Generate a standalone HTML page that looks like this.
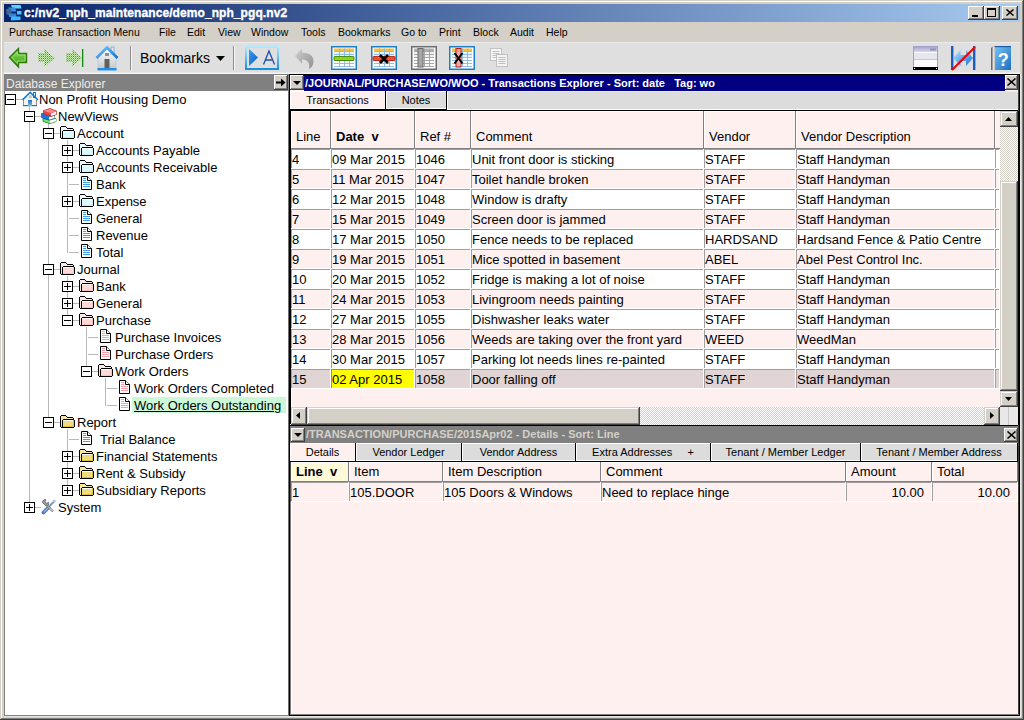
<!DOCTYPE html>
<html><head><meta charset="utf-8"><style>
html,body{margin:0;padding:0}
body{width:1024px;height:720px;overflow:hidden;position:relative;font-family:"Liberation Sans",sans-serif;background:#d4d0c8}
body div,body svg{position:absolute}
.t{white-space:pre;color:#000}
div>div,div>svg{position:absolute}
</style></head><body>
<div style="left:0px;top:0px;width:1024px;height:720px;background:#d4d0c8"></div>
<div style="left:1px;top:1px;width:1021px;height:1px;background:#fff"></div>
<div style="left:1px;top:1px;width:1px;height:717px;background:#fff"></div>
<div style="left:0px;top:719px;width:1024px;height:1px;background:#404040"></div>
<div style="left:1023px;top:0px;width:1px;height:720px;background:#404040"></div>
<div style="left:1px;top:718px;width:1022px;height:1px;background:#808080"></div>
<div style="left:1022px;top:1px;width:1px;height:718px;background:#808080"></div>
<div style="left:4px;top:4px;width:1016px;height:18px;background:linear-gradient(to right,#0a246a,#a6caf0)"></div>
<svg style="left:4px;top:4px" width="20" height="18" viewBox="0 0 20 18"><path d="M7 1 L16.5 1 L17.5 4.5 L11 4.5 L8 3.5 Z" fill="#60d0ff"/>
<path d="M4 3.5 L11 3.5 L12.5 7.5 L6 7.5 Z" fill="#3a90e8"/>
<path d="M13 7 L17.5 7 L17.5 10.5 L13 10.5 Z" fill="#48c4fa"/>
<path d="M2 5 L7 4.5 L7.5 11 L2.5 10.5 Z" fill="#3a6890"/>
<path d="M4.5 9.5 L12 9.5 L12.5 13 L5 13 Z" fill="#3a80dc"/>
<path d="M7 12.5 L16.5 12.5 L16.5 16 L7 16.5 Z" fill="#38b8ff"/></svg>
<div class="t" style="left:24px;top:4px;font-weight:bold;font-size:12px;line-height:18px;color:#fff;letter-spacing:0.08px;-webkit-text-stroke:0.35px #fff">c:/nv2_nph_maintenance/demo_nph_pgq.nv2</div>
<div style="left:968px;top:6px;width:16px;height:14px;background:#404040"></div>
<div style="left:968px;top:6px;width:15px;height:13px;background:#fff"></div>
<div style="left:969px;top:7px;width:14px;height:12px;background:#808080"></div>
<div style="left:969px;top:7px;width:13px;height:11px;background:#d4d0c8"></div>
<div style="left:972px;top:15px;width:6px;height:2px;background:#000"></div>
<div style="left:984px;top:6px;width:16px;height:14px;background:#404040"></div>
<div style="left:984px;top:6px;width:15px;height:13px;background:#fff"></div>
<div style="left:985px;top:7px;width:14px;height:12px;background:#808080"></div>
<div style="left:985px;top:7px;width:13px;height:11px;background:#d4d0c8"></div>
<div style="left:987px;top:8px;width:9px;height:9px;border:1px solid #000;border-top-width:2px;box-sizing:border-box"></div>
<div style="left:1002px;top:6px;width:16px;height:14px;background:#404040"></div>
<div style="left:1002px;top:6px;width:15px;height:13px;background:#fff"></div>
<div style="left:1003px;top:7px;width:14px;height:12px;background:#808080"></div>
<div style="left:1003px;top:7px;width:13px;height:11px;background:#d4d0c8"></div>
<svg style="left:1006px;top:9px" width="8" height="7" viewBox="0 0 8 7"><path d="M0.5 0.5 L7.5 6.5 M7.5 0.5 L0.5 6.5" stroke="#000" stroke-width="1.5"/></svg>
<div class="t" style="left:9px;top:24px;font-size:10.5px;line-height:16px;color:#000">Purchase Transaction Menu</div>
<div class="t" style="left:159px;top:24px;font-size:10.5px;line-height:16px;color:#000">File</div>
<div class="t" style="left:187px;top:24px;font-size:10.5px;line-height:16px;color:#000">Edit</div>
<div class="t" style="left:218px;top:24px;font-size:10.5px;line-height:16px;color:#000">View</div>
<div class="t" style="left:251px;top:24px;font-size:10.5px;line-height:16px;color:#000">Window</div>
<div class="t" style="left:301px;top:24px;font-size:10.5px;line-height:16px;color:#000">Tools</div>
<div class="t" style="left:338px;top:24px;font-size:10.5px;line-height:16px;color:#000">Bookmarks</div>
<div class="t" style="left:401px;top:24px;font-size:10.5px;line-height:16px;color:#000">Go to</div>
<div class="t" style="left:439px;top:24px;font-size:10.5px;line-height:16px;color:#000">Print</div>
<div class="t" style="left:473px;top:24px;font-size:10.5px;line-height:16px;color:#000">Block</div>
<div class="t" style="left:510px;top:24px;font-size:10.5px;line-height:16px;color:#000">Audit</div>
<div class="t" style="left:546px;top:24px;font-size:10.5px;line-height:16px;color:#000">Help</div>
<div style="left:4px;top:42px;width:1016px;height:32px;background:#dfdfdf"></div>
<div style="left:4px;top:42px;width:1016px;height:1px;background:#ececec"></div>
<div style="left:4px;top:72px;width:1016px;height:1px;background:#e8e8e8"></div>
<div style="left:4px;top:73px;width:1016px;height:1px;background:#f8f8f8"></div>
<svg style="left:8px;top:47px" width="20" height="22" viewBox="0 0 20 22"><defs><linearGradient id="bg1" x1="0" y1="0" x2="0" y2="1"><stop offset="0" stop-color="#8ee060"/><stop offset="1" stop-color="#3a9a10"/></linearGradient></defs>
<path d="M1.5 10.5 L10.5 1.5 V6.5 H18.5 V15.5 H10.5 V20 Z" fill="url(#bg1)" stroke="#2e7a0e" stroke-width="1.4" stroke-linejoin="miter"/>
<path d="M4 10.5 L9.5 5 V8 H17 V14 H9.5 V16.5 Z" fill="none" stroke="#a8f080" stroke-width="0.9" opacity="0.8"/></svg>
<svg style="left:37px;top:48px" width="20" height="21" viewBox="0 0 20 21"><defs><pattern id="dp" width="2" height="2" patternUnits="userSpaceOnUse"><rect x="0" y="0" width="2" height="2" fill="#c8f0b0"/><rect x="0" y="0" width="1" height="1" fill="#4a9a20"/><rect x="1" y="1" width="1" height="1" fill="#8ad060"/></pattern></defs>
<path d="M1 5 H7 V1 L18 10 L7 19 V14 H1 Z" fill="url(#dp)"/></svg>
<svg style="left:65px;top:48px" width="20" height="21" viewBox="0 0 20 21"><defs><pattern id="dp2" width="2" height="2" patternUnits="userSpaceOnUse"><rect x="0" y="0" width="2" height="2" fill="#c8f0b0"/><rect x="0" y="0" width="1" height="1" fill="#4a9a20"/><rect x="1" y="1" width="1" height="1" fill="#8ad060"/></pattern></defs>
<path d="M1 5 H7 V1 L17 10 L7 19 V14 H1 Z" fill="url(#dp2)"/>
<rect x="17" y="1" width="1.3" height="18" fill="#108a10"/></svg>
<svg style="left:95px;top:45px" width="25" height="26" viewBox="0 0 25 26"><defs><linearGradient id="hb" x1="0" y1="0" x2="0" y2="1"><stop offset="0" stop-color="#fafafa"/><stop offset="1" stop-color="#c8c8c8"/></linearGradient>
<linearGradient id="hr" x1="0" y1="0" x2="1" y2="1"><stop offset="0" stop-color="#70c8ff"/><stop offset="1" stop-color="#0a70d8"/></linearGradient></defs>
<path d="M3 12 L12 4 L21 12 V24 H3 Z" fill="url(#hb)" stroke="#a8c8e8" stroke-width="0.7"/>
<rect x="16" y="2" width="3" height="7" fill="#dde8f0" stroke="#6aa8e0" stroke-width="0.8"/>
<path d="M1.5 13 L12 2.5 L22.5 13" fill="none" stroke="url(#hr)" stroke-width="2.6" stroke-linejoin="round"/>
<rect x="10" y="8" width="4" height="3" fill="#909090"/>
<rect x="9.5" y="14" width="5" height="10" fill="#606060"/>
<rect x="2.5" y="23" width="19" height="2.4" fill="#1a90e8"/></svg>
<div style="left:130px;top:46px;width:1px;height:24px;background:#8c8c8c"></div>
<div style="left:131px;top:46px;width:1px;height:24px;background:#f8f8f8"></div>
<div class="t" style="left:140px;top:50px;font-size:14px;line-height:17px">Bookmarks</div>
<svg style="left:216px;top:56px" width="9" height="5" viewBox="0 0 9 5"><path d="M0 0 H9 L4.5 5 Z" fill="#000"/></svg>
<div style="left:233px;top:46px;width:1px;height:24px;background:#8c8c8c"></div>
<div style="left:234px;top:46px;width:1px;height:24px;background:#f8f8f8"></div>
<svg style="left:245px;top:46px" width="34" height="24" viewBox="0 0 34 24"><defs><linearGradient id="ab" x1="0" y1="0" x2="0" y2="1"><stop offset="0" stop-color="#b0e8ff"/><stop offset="1" stop-color="#1890e0"/></linearGradient>
<linearGradient id="at" x1="0" y1="0" x2="1" y2="1"><stop offset="0" stop-color="#3aa0f0"/><stop offset="1" stop-color="#0a5ac8"/></linearGradient></defs>
<rect x="1" y="1" width="32" height="22" fill="none" stroke="url(#ab)" stroke-width="2"/>
<path d="M4 3 L13 11.5 L4 20 Z" fill="url(#at)"/>
<path d="M18.5 18.5 L24 5 L29.5 18.5 M20.3 14 H27.7" fill="none" stroke="#1a50b0" stroke-width="1.3"/></svg>
<svg style="left:294px;top:47px" width="21" height="23" viewBox="0 0 21 23"><defs><linearGradient id="ug" x1="0" y1="0" x2="1" y2="1"><stop offset="0" stop-color="#d0d0d0"/><stop offset="1" stop-color="#909090"/></linearGradient></defs>
<path d="M1 9 L8 1.5 V5.5 C15 5.5 20 9 19.5 15 C19 19 17 21 15 22 C16 18 15 12.5 8 12.5 V16.5 Z" fill="url(#ug)"/></svg>
<svg style="left:331px;top:46px" width="26" height="24" viewBox="0 0 26 24"><rect x="0.75" y="0.75" width="24.5" height="22.5" fill="#fff" stroke="#1a7ec8" stroke-width="1.5"/><rect x="3" y="2.5" width="20" height="2.5" fill="#f8c040"/><rect x="3" y="5" width="20" height="6" fill="#e0f4ff"/><path d="M3 5.5 H23" stroke="#8ab8e0" stroke-width="0.9"/><path d="M3 8.5 H23" stroke="#8ab8e0" stroke-width="0.9"/><path d="M3 11.5 H23" stroke="#8ab8e0" stroke-width="0.9"/><path d="M3 14.5 H23" stroke="#8ab8e0" stroke-width="0.9"/><path d="M3 17.5 H23" stroke="#8ab8e0" stroke-width="0.9"/><path d="M3 20.5 H23" stroke="#8ab8e0" stroke-width="0.9"/><path d="M8.5 2.5 V21" stroke="#8ab8e0" stroke-width="0.9"/><path d="M13.5 2.5 V21" stroke="#8ab8e0" stroke-width="0.9"/><path d="M18.5 2.5 V21" stroke="#8ab8e0" stroke-width="0.9"/><rect x="3" y="10.5" width="20" height="4" rx="0.5" fill="#90d020" stroke="#3a8a00" stroke-width="0.9"/></svg>
<svg style="left:371px;top:46px" width="26" height="24" viewBox="0 0 26 24"><rect x="0.75" y="0.75" width="24.5" height="22.5" fill="#fff" stroke="#1a7ec8" stroke-width="1.5"/><rect x="3" y="2.5" width="20" height="2.5" fill="#f8c040"/><rect x="3" y="5" width="20" height="6" fill="#e0f4ff"/><path d="M3 5.5 H23" stroke="#8ab8e0" stroke-width="0.9"/><path d="M3 8.5 H23" stroke="#8ab8e0" stroke-width="0.9"/><path d="M3 11.5 H23" stroke="#8ab8e0" stroke-width="0.9"/><path d="M3 14.5 H23" stroke="#8ab8e0" stroke-width="0.9"/><path d="M3 17.5 H23" stroke="#8ab8e0" stroke-width="0.9"/><path d="M3 20.5 H23" stroke="#8ab8e0" stroke-width="0.9"/><path d="M8.5 2.5 V21" stroke="#8ab8e0" stroke-width="0.9"/><path d="M13.5 2.5 V21" stroke="#8ab8e0" stroke-width="0.9"/><path d="M18.5 2.5 V21" stroke="#8ab8e0" stroke-width="0.9"/><rect x="2" y="10.5" width="22" height="4" rx="0.5" fill="#f05030" stroke="#c02010" stroke-width="0.9"/><path d="M9 9 L17 17 M17 9 L9 17" stroke="#000" stroke-width="2.6"/></svg>
<svg style="left:411px;top:46px" width="26" height="24" viewBox="0 0 26 24"><rect x="0.75" y="0.75" width="24.5" height="22.5" fill="#fff" stroke="#6c6c6c" stroke-width="1.5"/><rect x="3" y="2.5" width="20" height="2.5" fill="#b0b0b0"/><rect x="3" y="5" width="20" height="6" fill="#f0f0f0"/><path d="M3 5.5 H23" stroke="#a0a0a0" stroke-width="0.9"/><path d="M3 8.5 H23" stroke="#a0a0a0" stroke-width="0.9"/><path d="M3 11.5 H23" stroke="#a0a0a0" stroke-width="0.9"/><path d="M3 14.5 H23" stroke="#a0a0a0" stroke-width="0.9"/><path d="M3 17.5 H23" stroke="#a0a0a0" stroke-width="0.9"/><path d="M3 20.5 H23" stroke="#a0a0a0" stroke-width="0.9"/><path d="M8.5 2.5 V21" stroke="#a0a0a0" stroke-width="0.9"/><path d="M13.5 2.5 V21" stroke="#a0a0a0" stroke-width="0.9"/><path d="M18.5 2.5 V21" stroke="#a0a0a0" stroke-width="0.9"/><rect x="7" y="2.5" width="5" height="18.5" fill="#a8a8a8" stroke="#6a6a6a" stroke-width="1"/></svg>
<svg style="left:449px;top:46px" width="26" height="24" viewBox="0 0 26 24"><rect x="0.75" y="0.75" width="24.5" height="22.5" fill="#fff" stroke="#1a7ec8" stroke-width="1.5"/><rect x="3" y="2.5" width="20" height="2.5" fill="#f8c040"/><rect x="3" y="5" width="20" height="6" fill="#e0f4ff"/><path d="M3 5.5 H23" stroke="#8ab8e0" stroke-width="0.9"/><path d="M3 8.5 H23" stroke="#8ab8e0" stroke-width="0.9"/><path d="M3 11.5 H23" stroke="#8ab8e0" stroke-width="0.9"/><path d="M3 14.5 H23" stroke="#8ab8e0" stroke-width="0.9"/><path d="M3 17.5 H23" stroke="#8ab8e0" stroke-width="0.9"/><path d="M3 20.5 H23" stroke="#8ab8e0" stroke-width="0.9"/><path d="M8.5 2.5 V21" stroke="#8ab8e0" stroke-width="0.9"/><path d="M13.5 2.5 V21" stroke="#8ab8e0" stroke-width="0.9"/><path d="M18.5 2.5 V21" stroke="#8ab8e0" stroke-width="0.9"/><rect x="7" y="2.5" width="5" height="18.5" fill="#f0a0a0" fill-opacity="0.8" stroke="#c02010" stroke-width="1"/><path d="M5.5 7 L13.5 17.5 M13.5 7 L5.5 17.5" stroke="#000" stroke-width="2"/></svg>
<svg style="left:489px;top:47px" width="22" height="22" viewBox="0 0 22 22"><rect x="1.5" y="1.5" width="11" height="12" fill="#f8f8f8" stroke="#c0c0c0"/>
<path d="M3.5 4.5 H10.5 M3.5 6.5 H10.5 M3.5 8.5 H10.5 M3.5 10.5 H10.5" stroke="#b0b0b0" stroke-width="0.8"/>
<rect x="7.5" y="7.5" width="11" height="12" fill="#f4f4f4" stroke="#c0c0c0"/>
<path d="M9.5 10.5 H16.5 M9.5 12.5 H16.5 M9.5 14.5 H16.5 M9.5 16.5 H16.5" stroke="#b0b0b0" stroke-width="0.8"/></svg>
<svg style="left:913px;top:46px" width="25" height="24" viewBox="0 0 25 24"><defs><linearGradient id="wg" x1="0" y1="0" x2="0" y2="1"><stop offset="0" stop-color="#a8a8d0"/><stop offset="1" stop-color="#d8d8ec"/></linearGradient></defs>
<rect x="0.5" y="0.5" width="24" height="22" fill="#f4f4fa" stroke="#a0a0c8"/>
<rect x="1" y="1" width="23" height="5" fill="url(#wg)"/>
<rect x="17" y="2.5" width="6" height="2" fill="#9090b8"/>
<rect x="1" y="6" width="23" height="1" fill="#fafafe"/>
<rect x="1" y="7" width="23" height="6" fill="#e6e6f0"/>
<rect x="1" y="13" width="23" height="1" fill="#c8c8d8"/>
<rect x="1" y="14" width="23" height="7" fill="#fcfcff"/>
<rect x="0" y="21" width="25" height="3" fill="#000"/>
<rect x="1" y="22" width="1" height="1" fill="#fff"/><rect x="23" y="22" width="1" height="1" fill="#fff"/></svg>
<svg style="left:951px;top:46px" width="25" height="25" viewBox="0 0 25 25"><defs><linearGradient id="ag" x1="0" y1="0" x2="1" y2="1"><stop offset="0" stop-color="#b0e4ff"/><stop offset="1" stop-color="#1a70d8"/></linearGradient></defs>
<rect x="0" y="0" width="2.4" height="24" fill="#1a5cc0"/>
<rect x="22" y="0" width="2.4" height="24" fill="#1a5cc0"/>
<path d="M2.5 12 L9.5 4 V9 H15 V4 L22 12 L15 20 V15 H9.5 V20 Z" fill="url(#ag)"/>
<path d="M1 24 L24 1" stroke="#f00000" stroke-width="2"/></svg>
<svg style="left:990px;top:45px" width="23" height="26" viewBox="0 0 23 26"><defs><linearGradient id="hg" x1="0" y1="0" x2="1" y2="1"><stop offset="0" stop-color="#78c4f4"/><stop offset="1" stop-color="#1a6ec0"/></linearGradient>
<linearGradient id="sp" x1="0" y1="0" x2="1" y2="0"><stop offset="0" stop-color="#505050"/><stop offset="0.6" stop-color="#d0d0d0"/><stop offset="1" stop-color="#808080"/></linearGradient></defs>
<path d="M1 3 L3 1 H5 V25 H1 Z" fill="url(#sp)"/>
<rect x="3.5" y="2" width="1" height="23" fill="#fff"/>
<rect x="5" y="1" width="16" height="24" fill="url(#hg)"/>
<rect x="5" y="1" width="16" height="1.2" fill="#1a5ca8"/>
<text x="13.2" y="21" font-family="Liberation Sans" font-weight="bold" font-size="18" fill="#fff" text-anchor="middle">?</text></svg>
<div style="left:4px;top:74px;width:285px;height:642px;background:#808080"></div>
<div style="left:5px;top:91px;width:283px;height:624px;background:#fff"></div>
<div style="left:288px;top:74px;width:1px;height:642px;background:#808080"></div>
<div style="left:289px;top:74px;width:1px;height:641px;background:#000"></div>
<div style="left:4px;top:74px;width:285px;height:17px;background:#808080"></div>
<div class="t" style="left:6px;top:76px;font-size:12px;line-height:16px;color:#ececec">Database Explorer</div>
<div style="left:274px;top:75px;width:14px;height:15px;background:#404040"></div>
<div style="left:274px;top:75px;width:13px;height:14px;background:#fff"></div>
<div style="left:275px;top:76px;width:12px;height:13px;background:#808080"></div>
<div style="left:275px;top:76px;width:11px;height:12px;background:#d4d0c8"></div>
<svg style="left:276px;top:78px" width="10" height="9" viewBox="0 0 10 9"><path d="M0 3.5 H5 V0.5 L9.5 4.5 L5 8.5 V5.5 H0 Z" fill="#000"/></svg>
<div style="left:29px;top:106px;width:1px;height:402px;background:#b8b8b8"></div>
<div style="left:48px;top:123px;width:1px;height:300px;background:#b8b8b8"></div>
<div style="left:67px;top:140px;width:1px;height:113px;background:#b8b8b8"></div>
<div style="left:67px;top:276px;width:1px;height:45px;background:#b8b8b8"></div>
<div style="left:86px;top:327px;width:1px;height:45px;background:#b8b8b8"></div>
<div style="left:105px;top:378px;width:1px;height:28px;background:#b8b8b8"></div>
<div style="left:67px;top:429px;width:1px;height:62px;background:#b8b8b8"></div>
<div style="left:16px;top:99px;width:6px;height:1px;background:#b8b8b8"></div>
<div style="left:5px;top:94px;width:11px;height:11px;background:#fff;border:1px solid #000;box-sizing:border-box"></div>
<div style="left:7px;top:99px;width:7px;height:1px;background:#000"></div>
<svg style="left:22px;top:91px" width="17" height="16" viewBox="0 0 17 16">
<defs><linearGradient id="hd" x1="0" y1="0" x2="0" y2="1"><stop offset="0" stop-color="#1a72c8"/><stop offset="1" stop-color="#90c0c8"/></linearGradient></defs>
<path d="M1.5 9 L8.5 2 L15.5 9 V14 H1.5 Z" fill="#f6f6f0"/>
<rect x="1" y="9" width="1" height="5" fill="#909090"/><rect x="14" y="9" width="1" height="5" fill="#909090"/>
<rect x="11.5" y="1.5" width="2" height="5" fill="#fff" stroke="#0a78d8" stroke-width="1"/>
<path d="M0.5 9 L8.2 1.3 L16 9" fill="none" stroke="#0a78d8" stroke-width="1.6"/>
<circle cx="8.3" cy="5.8" r="1.7" fill="#c4c4c4"/>
<rect x="1" y="14" width="14" height="1.2" fill="#0a78d8"/>
<rect x="6" y="9" width="4" height="6" fill="url(#hd)"/>
</svg>
<div class="t" style="left:39px;top:91px;font-size:13px;line-height:17px">Non Profit Housing Demo</div>
<div style="left:35px;top:116px;width:6px;height:1px;background:#b8b8b8"></div>
<div style="left:24px;top:111px;width:11px;height:11px;background:#fff;border:1px solid #000;box-sizing:border-box"></div>
<div style="left:26px;top:116px;width:7px;height:1px;background:#000"></div>
<svg style="left:41px;top:107px" width="17" height="17" viewBox="0 0 17 17">
<path d="M2 11.5 L8 10.5 L15 11.5 V14.5 L9 16.5 L2 14.5 Z" fill="#30b030" stroke="#1a7a1a" stroke-width="0.8"/>
<path d="M2.5 12 L9 13.5 V16 L2.5 14.2 Z" fill="#70e870"/>
<path d="M9 13.5 L15 11.8 V14.3 L9 16.2 Z" fill="#fff"/>
<path d="M0.5 6.5 L6 6 L13.5 8.5 V11 L7.5 13 L0.5 10.5 Z" fill="#1a78e0" stroke="#0a4aa0" stroke-width="0.7"/>
<path d="M8 10 L13.5 8.5 V11 L8 12.8 Z" fill="#fff"/>
<path d="M2.5 3.5 L9 1.5 L15.5 4 V7.5 L10 9.5 L2.5 6.8 Z" fill="#e84848" stroke="#b82020" stroke-width="0.7"/>
<path d="M2.8 3.8 L9 2 L15 4.2 L9.5 6 Z" fill="#ff8a8a"/>
<path d="M10 6.5 L15.2 4.6 V7.2 L10 9 Z" fill="#fff"/>
</svg>
<div class="t" style="left:58px;top:108px;font-size:13px;line-height:17px">NewViews</div>
<div style="left:54px;top:133px;width:6px;height:1px;background:#b8b8b8"></div>
<div style="left:43px;top:128px;width:11px;height:11px;background:#fff;border:1px solid #000;box-sizing:border-box"></div>
<div style="left:45px;top:133px;width:7px;height:1px;background:#000"></div>
<svg style="left:60px;top:126px" width="15" height="13" shape-rendering="crispEdges"><rect x="1" y="1" width="5" height="11" fill="#e8fcff"/><rect x="6" y="2" width="1" height="2" fill="#e8fcff"/><rect x="7" y="3" width="6" height="1" fill="#e8fcff"/><rect x="3" y="5" width="11" height="7" fill="#dcfaff"/><rect x="3" y="5" width="11" height="1" fill="#fff"/><rect x="13" y="5" width="1" height="7" fill="#c8f0f8"/><rect x="3" y="11" width="11" height="1" fill="#c8f0f8"/><rect x="1" y="0" width="5" height="1" fill="#000"/><rect x="6" y="1" width="1" height="1" fill="#000"/><rect x="7" y="2" width="6" height="1" fill="#000"/><rect x="13" y="3" width="1" height="1" fill="#000"/><rect x="0" y="1" width="1" height="11" fill="#000"/><rect x="1" y="12" width="1" height="1" fill="#000"/><rect x="3" y="4" width="11" height="1" fill="#000"/><rect x="2" y="5" width="1" height="7" fill="#000"/><rect x="14" y="5" width="1" height="7" fill="#000"/><rect x="2" y="12" width="12" height="1" fill="#000"/></svg>
<div class="t" style="left:77px;top:125px;font-size:13px;line-height:17px">Account</div>
<div style="left:73px;top:150px;width:6px;height:1px;background:#b8b8b8"></div>
<div style="left:62px;top:145px;width:11px;height:11px;background:#fff;border:1px solid #000;box-sizing:border-box"></div>
<div style="left:64px;top:150px;width:7px;height:1px;background:#000"></div>
<div style="left:67px;top:147px;width:1px;height:7px;background:#000"></div>
<svg style="left:79px;top:143px" width="15" height="13" shape-rendering="crispEdges"><rect x="1" y="1" width="5" height="11" fill="#e8fcff"/><rect x="6" y="2" width="1" height="2" fill="#e8fcff"/><rect x="7" y="3" width="6" height="1" fill="#e8fcff"/><rect x="3" y="5" width="11" height="7" fill="#dcfaff"/><rect x="3" y="5" width="11" height="1" fill="#fff"/><rect x="13" y="5" width="1" height="7" fill="#c8f0f8"/><rect x="3" y="11" width="11" height="1" fill="#c8f0f8"/><rect x="1" y="0" width="5" height="1" fill="#000"/><rect x="6" y="1" width="1" height="1" fill="#000"/><rect x="7" y="2" width="6" height="1" fill="#000"/><rect x="13" y="3" width="1" height="1" fill="#000"/><rect x="0" y="1" width="1" height="11" fill="#000"/><rect x="1" y="12" width="1" height="1" fill="#000"/><rect x="3" y="4" width="11" height="1" fill="#000"/><rect x="2" y="5" width="1" height="7" fill="#000"/><rect x="14" y="5" width="1" height="7" fill="#000"/><rect x="2" y="12" width="12" height="1" fill="#000"/></svg>
<div class="t" style="left:96px;top:142px;font-size:13px;line-height:17px">Accounts Payable</div>
<div style="left:73px;top:167px;width:6px;height:1px;background:#b8b8b8"></div>
<div style="left:62px;top:162px;width:11px;height:11px;background:#fff;border:1px solid #000;box-sizing:border-box"></div>
<div style="left:64px;top:167px;width:7px;height:1px;background:#000"></div>
<div style="left:67px;top:164px;width:1px;height:7px;background:#000"></div>
<svg style="left:79px;top:160px" width="15" height="13" shape-rendering="crispEdges"><rect x="1" y="1" width="5" height="11" fill="#e8fcff"/><rect x="6" y="2" width="1" height="2" fill="#e8fcff"/><rect x="7" y="3" width="6" height="1" fill="#e8fcff"/><rect x="3" y="5" width="11" height="7" fill="#dcfaff"/><rect x="3" y="5" width="11" height="1" fill="#fff"/><rect x="13" y="5" width="1" height="7" fill="#c8f0f8"/><rect x="3" y="11" width="11" height="1" fill="#c8f0f8"/><rect x="1" y="0" width="5" height="1" fill="#000"/><rect x="6" y="1" width="1" height="1" fill="#000"/><rect x="7" y="2" width="6" height="1" fill="#000"/><rect x="13" y="3" width="1" height="1" fill="#000"/><rect x="0" y="1" width="1" height="11" fill="#000"/><rect x="1" y="12" width="1" height="1" fill="#000"/><rect x="3" y="4" width="11" height="1" fill="#000"/><rect x="2" y="5" width="1" height="7" fill="#000"/><rect x="14" y="5" width="1" height="7" fill="#000"/><rect x="2" y="12" width="12" height="1" fill="#000"/></svg>
<div class="t" style="left:96px;top:159px;font-size:13px;line-height:17px">Accounts Receivable</div>
<div style="left:69px;top:184px;width:10px;height:1px;background:#b8b8b8"></div>
<svg style="left:81px;top:176px" width="11" height="14"><path d="M0.5 0.5 H6.5 L10.5 4.5 V13.5 H0.5 Z" fill="#fff" stroke="#000"/><path d="M6.5 0.5 V4.5 H10.5" fill="#fff" stroke="#000"/><rect x="2" y="2" width="3" height="1" fill="#40a0e8"/><rect x="2" y="4" width="3" height="1" fill="#40a0e8"/><rect x="2" y="6" width="7" height="1" fill="#40a0e8"/><rect x="2" y="8" width="7" height="1" fill="#40a0e8"/><rect x="2" y="10" width="7" height="1" fill="#40a0e8"/></svg>
<div class="t" style="left:96px;top:176px;font-size:13px;line-height:17px">Bank</div>
<div style="left:73px;top:201px;width:6px;height:1px;background:#b8b8b8"></div>
<div style="left:62px;top:196px;width:11px;height:11px;background:#fff;border:1px solid #000;box-sizing:border-box"></div>
<div style="left:64px;top:201px;width:7px;height:1px;background:#000"></div>
<div style="left:67px;top:198px;width:1px;height:7px;background:#000"></div>
<svg style="left:79px;top:194px" width="15" height="13" shape-rendering="crispEdges"><rect x="1" y="1" width="5" height="11" fill="#e8fcff"/><rect x="6" y="2" width="1" height="2" fill="#e8fcff"/><rect x="7" y="3" width="6" height="1" fill="#e8fcff"/><rect x="3" y="5" width="11" height="7" fill="#dcfaff"/><rect x="3" y="5" width="11" height="1" fill="#fff"/><rect x="13" y="5" width="1" height="7" fill="#c8f0f8"/><rect x="3" y="11" width="11" height="1" fill="#c8f0f8"/><rect x="1" y="0" width="5" height="1" fill="#000"/><rect x="6" y="1" width="1" height="1" fill="#000"/><rect x="7" y="2" width="6" height="1" fill="#000"/><rect x="13" y="3" width="1" height="1" fill="#000"/><rect x="0" y="1" width="1" height="11" fill="#000"/><rect x="1" y="12" width="1" height="1" fill="#000"/><rect x="3" y="4" width="11" height="1" fill="#000"/><rect x="2" y="5" width="1" height="7" fill="#000"/><rect x="14" y="5" width="1" height="7" fill="#000"/><rect x="2" y="12" width="12" height="1" fill="#000"/></svg>
<div class="t" style="left:96px;top:193px;font-size:13px;line-height:17px">Expense</div>
<div style="left:69px;top:218px;width:10px;height:1px;background:#b8b8b8"></div>
<svg style="left:81px;top:210px" width="11" height="14"><path d="M0.5 0.5 H6.5 L10.5 4.5 V13.5 H0.5 Z" fill="#fff" stroke="#000"/><path d="M6.5 0.5 V4.5 H10.5" fill="#fff" stroke="#000"/><rect x="2" y="2" width="3" height="1" fill="#40a0e8"/><rect x="2" y="4" width="3" height="1" fill="#40a0e8"/><rect x="2" y="6" width="7" height="1" fill="#40a0e8"/><rect x="2" y="8" width="7" height="1" fill="#40a0e8"/><rect x="2" y="10" width="7" height="1" fill="#40a0e8"/></svg>
<div class="t" style="left:96px;top:210px;font-size:13px;line-height:17px">General</div>
<div style="left:69px;top:235px;width:10px;height:1px;background:#b8b8b8"></div>
<svg style="left:81px;top:227px" width="11" height="14"><path d="M0.5 0.5 H6.5 L10.5 4.5 V13.5 H0.5 Z" fill="#fff" stroke="#000"/><path d="M6.5 0.5 V4.5 H10.5" fill="#fff" stroke="#000"/><rect x="2" y="2" width="3" height="1" fill="#40a0e8"/><rect x="2" y="4" width="3" height="1" fill="#40a0e8"/><rect x="2" y="6" width="7" height="1" fill="#40a0e8"/><rect x="2" y="8" width="7" height="1" fill="#40a0e8"/><rect x="2" y="10" width="7" height="1" fill="#40a0e8"/></svg>
<div class="t" style="left:96px;top:227px;font-size:13px;line-height:17px">Revenue</div>
<div style="left:69px;top:252px;width:10px;height:1px;background:#b8b8b8"></div>
<svg style="left:81px;top:244px" width="11" height="14"><path d="M0.5 0.5 H6.5 L10.5 4.5 V13.5 H0.5 Z" fill="#fff" stroke="#000"/><path d="M6.5 0.5 V4.5 H10.5" fill="#fff" stroke="#000"/><rect x="2" y="2" width="3" height="1" fill="#40a0e8"/><rect x="2" y="4" width="3" height="1" fill="#40a0e8"/><rect x="2" y="6" width="7" height="1" fill="#40a0e8"/><rect x="2" y="8" width="7" height="1" fill="#40a0e8"/><rect x="2" y="10" width="7" height="1" fill="#40a0e8"/></svg>
<div class="t" style="left:96px;top:244px;font-size:13px;line-height:17px">Total</div>
<div style="left:54px;top:269px;width:6px;height:1px;background:#b8b8b8"></div>
<div style="left:43px;top:264px;width:11px;height:11px;background:#fff;border:1px solid #000;box-sizing:border-box"></div>
<div style="left:45px;top:269px;width:7px;height:1px;background:#000"></div>
<svg style="left:60px;top:262px" width="15" height="13" shape-rendering="crispEdges"><rect x="1" y="1" width="5" height="11" fill="#ffe8e8"/><rect x="6" y="2" width="1" height="2" fill="#ffe8e8"/><rect x="7" y="3" width="6" height="1" fill="#ffe8e8"/><rect x="3" y="5" width="11" height="7" fill="#ffd8d8"/><rect x="3" y="5" width="11" height="1" fill="#fff"/><rect x="13" y="5" width="1" height="7" fill="#ffc0c0"/><rect x="3" y="11" width="11" height="1" fill="#ffc0c0"/><rect x="1" y="0" width="5" height="1" fill="#000"/><rect x="6" y="1" width="1" height="1" fill="#000"/><rect x="7" y="2" width="6" height="1" fill="#000"/><rect x="13" y="3" width="1" height="1" fill="#000"/><rect x="0" y="1" width="1" height="11" fill="#000"/><rect x="1" y="12" width="1" height="1" fill="#000"/><rect x="3" y="4" width="11" height="1" fill="#000"/><rect x="2" y="5" width="1" height="7" fill="#000"/><rect x="14" y="5" width="1" height="7" fill="#000"/><rect x="2" y="12" width="12" height="1" fill="#000"/></svg>
<div class="t" style="left:77px;top:261px;font-size:13px;line-height:17px">Journal</div>
<div style="left:73px;top:286px;width:6px;height:1px;background:#b8b8b8"></div>
<div style="left:62px;top:281px;width:11px;height:11px;background:#fff;border:1px solid #000;box-sizing:border-box"></div>
<div style="left:64px;top:286px;width:7px;height:1px;background:#000"></div>
<div style="left:67px;top:283px;width:1px;height:7px;background:#000"></div>
<svg style="left:79px;top:279px" width="15" height="13" shape-rendering="crispEdges"><rect x="1" y="1" width="5" height="11" fill="#ffe8e8"/><rect x="6" y="2" width="1" height="2" fill="#ffe8e8"/><rect x="7" y="3" width="6" height="1" fill="#ffe8e8"/><rect x="3" y="5" width="11" height="7" fill="#ffd8d8"/><rect x="3" y="5" width="11" height="1" fill="#fff"/><rect x="13" y="5" width="1" height="7" fill="#ffc0c0"/><rect x="3" y="11" width="11" height="1" fill="#ffc0c0"/><rect x="1" y="0" width="5" height="1" fill="#000"/><rect x="6" y="1" width="1" height="1" fill="#000"/><rect x="7" y="2" width="6" height="1" fill="#000"/><rect x="13" y="3" width="1" height="1" fill="#000"/><rect x="0" y="1" width="1" height="11" fill="#000"/><rect x="1" y="12" width="1" height="1" fill="#000"/><rect x="3" y="4" width="11" height="1" fill="#000"/><rect x="2" y="5" width="1" height="7" fill="#000"/><rect x="14" y="5" width="1" height="7" fill="#000"/><rect x="2" y="12" width="12" height="1" fill="#000"/></svg>
<div class="t" style="left:96px;top:278px;font-size:13px;line-height:17px">Bank</div>
<div style="left:73px;top:303px;width:6px;height:1px;background:#b8b8b8"></div>
<div style="left:62px;top:298px;width:11px;height:11px;background:#fff;border:1px solid #000;box-sizing:border-box"></div>
<div style="left:64px;top:303px;width:7px;height:1px;background:#000"></div>
<div style="left:67px;top:300px;width:1px;height:7px;background:#000"></div>
<svg style="left:79px;top:296px" width="15" height="13" shape-rendering="crispEdges"><rect x="1" y="1" width="5" height="11" fill="#ffe8e8"/><rect x="6" y="2" width="1" height="2" fill="#ffe8e8"/><rect x="7" y="3" width="6" height="1" fill="#ffe8e8"/><rect x="3" y="5" width="11" height="7" fill="#ffd8d8"/><rect x="3" y="5" width="11" height="1" fill="#fff"/><rect x="13" y="5" width="1" height="7" fill="#ffc0c0"/><rect x="3" y="11" width="11" height="1" fill="#ffc0c0"/><rect x="1" y="0" width="5" height="1" fill="#000"/><rect x="6" y="1" width="1" height="1" fill="#000"/><rect x="7" y="2" width="6" height="1" fill="#000"/><rect x="13" y="3" width="1" height="1" fill="#000"/><rect x="0" y="1" width="1" height="11" fill="#000"/><rect x="1" y="12" width="1" height="1" fill="#000"/><rect x="3" y="4" width="11" height="1" fill="#000"/><rect x="2" y="5" width="1" height="7" fill="#000"/><rect x="14" y="5" width="1" height="7" fill="#000"/><rect x="2" y="12" width="12" height="1" fill="#000"/></svg>
<div class="t" style="left:96px;top:295px;font-size:13px;line-height:17px">General</div>
<div style="left:73px;top:320px;width:6px;height:1px;background:#b8b8b8"></div>
<div style="left:62px;top:315px;width:11px;height:11px;background:#fff;border:1px solid #000;box-sizing:border-box"></div>
<div style="left:64px;top:320px;width:7px;height:1px;background:#000"></div>
<svg style="left:79px;top:313px" width="15" height="13" shape-rendering="crispEdges"><rect x="1" y="1" width="5" height="11" fill="#ffe8e8"/><rect x="6" y="2" width="1" height="2" fill="#ffe8e8"/><rect x="7" y="3" width="6" height="1" fill="#ffe8e8"/><rect x="3" y="5" width="11" height="7" fill="#ffd8d8"/><rect x="3" y="5" width="11" height="1" fill="#fff"/><rect x="13" y="5" width="1" height="7" fill="#ffc0c0"/><rect x="3" y="11" width="11" height="1" fill="#ffc0c0"/><rect x="1" y="0" width="5" height="1" fill="#000"/><rect x="6" y="1" width="1" height="1" fill="#000"/><rect x="7" y="2" width="6" height="1" fill="#000"/><rect x="13" y="3" width="1" height="1" fill="#000"/><rect x="0" y="1" width="1" height="11" fill="#000"/><rect x="1" y="12" width="1" height="1" fill="#000"/><rect x="3" y="4" width="11" height="1" fill="#000"/><rect x="2" y="5" width="1" height="7" fill="#000"/><rect x="14" y="5" width="1" height="7" fill="#000"/><rect x="2" y="12" width="12" height="1" fill="#000"/></svg>
<div class="t" style="left:96px;top:312px;font-size:13px;line-height:17px">Purchase</div>
<div style="left:88px;top:337px;width:10px;height:1px;background:#b8b8b8"></div>
<svg style="left:100px;top:329px" width="11" height="14"><path d="M0.5 0.5 H6.5 L10.5 4.5 V13.5 H0.5 Z" fill="#fff" stroke="#000"/><path d="M6.5 0.5 V4.5 H10.5" fill="#fff" stroke="#000"/><rect x="2" y="2" width="3" height="1" fill="#f8a0a8"/><rect x="2" y="4" width="3" height="1" fill="#f8a0a8"/><rect x="2" y="6" width="7" height="1" fill="#f8a0a8"/><rect x="2" y="8" width="7" height="1" fill="#f8a0a8"/><rect x="2" y="10" width="7" height="1" fill="#f8a0a8"/></svg>
<div class="t" style="left:115px;top:329px;font-size:13px;line-height:17px">Purchase Invoices</div>
<div style="left:88px;top:354px;width:10px;height:1px;background:#b8b8b8"></div>
<svg style="left:100px;top:346px" width="11" height="14"><path d="M0.5 0.5 H6.5 L10.5 4.5 V13.5 H0.5 Z" fill="#fff" stroke="#000"/><path d="M6.5 0.5 V4.5 H10.5" fill="#fff" stroke="#000"/><rect x="2" y="2" width="3" height="1" fill="#f8a0a8"/><rect x="2" y="4" width="3" height="1" fill="#f8a0a8"/><rect x="2" y="6" width="7" height="1" fill="#f8a0a8"/><rect x="2" y="8" width="7" height="1" fill="#f8a0a8"/><rect x="2" y="10" width="7" height="1" fill="#f8a0a8"/></svg>
<div class="t" style="left:115px;top:346px;font-size:13px;line-height:17px">Purchase Orders</div>
<div style="left:92px;top:371px;width:6px;height:1px;background:#b8b8b8"></div>
<div style="left:81px;top:366px;width:11px;height:11px;background:#fff;border:1px solid #000;box-sizing:border-box"></div>
<div style="left:83px;top:371px;width:7px;height:1px;background:#000"></div>
<svg style="left:98px;top:364px" width="15" height="13" shape-rendering="crispEdges"><rect x="1" y="1" width="5" height="11" fill="#ffe8e8"/><rect x="6" y="2" width="1" height="2" fill="#ffe8e8"/><rect x="7" y="3" width="6" height="1" fill="#ffe8e8"/><rect x="3" y="5" width="11" height="7" fill="#ffd8d8"/><rect x="3" y="5" width="11" height="1" fill="#fff"/><rect x="13" y="5" width="1" height="7" fill="#ffc0c0"/><rect x="3" y="11" width="11" height="1" fill="#ffc0c0"/><rect x="1" y="0" width="5" height="1" fill="#000"/><rect x="6" y="1" width="1" height="1" fill="#000"/><rect x="7" y="2" width="6" height="1" fill="#000"/><rect x="13" y="3" width="1" height="1" fill="#000"/><rect x="0" y="1" width="1" height="11" fill="#000"/><rect x="1" y="12" width="1" height="1" fill="#000"/><rect x="3" y="4" width="11" height="1" fill="#000"/><rect x="2" y="5" width="1" height="7" fill="#000"/><rect x="14" y="5" width="1" height="7" fill="#000"/><rect x="2" y="12" width="12" height="1" fill="#000"/></svg>
<div class="t" style="left:115px;top:363px;font-size:13px;line-height:17px">Work Orders</div>
<div style="left:107px;top:388px;width:10px;height:1px;background:#b8b8b8"></div>
<svg style="left:119px;top:380px" width="11" height="14"><path d="M0.5 0.5 H6.5 L10.5 4.5 V13.5 H0.5 Z" fill="#fff" stroke="#000"/><path d="M6.5 0.5 V4.5 H10.5" fill="#fff" stroke="#000"/><rect x="2" y="2" width="3" height="1" fill="#f8a0a8"/><rect x="2" y="4" width="3" height="1" fill="#f8a0a8"/><rect x="2" y="6" width="7" height="1" fill="#f8a0a8"/><rect x="2" y="8" width="7" height="1" fill="#f8a0a8"/><rect x="2" y="10" width="7" height="1" fill="#f8a0a8"/></svg>
<div class="t" style="left:134px;top:380px;font-size:13px;line-height:17px">Work Orders Completed</div>
<div style="left:107px;top:405px;width:10px;height:1px;background:#b8b8b8"></div>
<svg style="left:119px;top:397px" width="11" height="14"><path d="M0.5 0.5 H6.5 L10.5 4.5 V13.5 H0.5 Z" fill="#fff" stroke="#000"/><path d="M6.5 0.5 V4.5 H10.5" fill="#fff" stroke="#000"/><rect x="2" y="2" width="3" height="1" fill="#f8a0a8"/><rect x="2" y="4" width="3" height="1" fill="#f8a0a8"/><rect x="2" y="6" width="7" height="1" fill="#f8a0a8"/><rect x="2" y="8" width="7" height="1" fill="#f8a0a8"/><rect x="2" y="10" width="7" height="1" fill="#f8a0a8"/></svg>
<div style="left:132px;top:397px;width:154px;height:16px;background:#ccf8d8"></div>
<div class="t" style="left:134px;top:397px;font-size:13px;line-height:17px;text-decoration:underline">Work Orders Outstanding</div>
<div style="left:54px;top:422px;width:6px;height:1px;background:#b8b8b8"></div>
<div style="left:43px;top:417px;width:11px;height:11px;background:#fff;border:1px solid #000;box-sizing:border-box"></div>
<div style="left:45px;top:422px;width:7px;height:1px;background:#000"></div>
<svg style="left:60px;top:415px" width="15" height="13" shape-rendering="crispEdges"><rect x="1" y="1" width="5" height="11" fill="#f8e8a0"/><rect x="6" y="2" width="1" height="2" fill="#f8e8a0"/><rect x="7" y="3" width="6" height="1" fill="#f8e8a0"/><rect x="3" y="5" width="11" height="7" fill="#f0dc80"/><rect x="3" y="5" width="11" height="1" fill="#fff"/><rect x="13" y="5" width="1" height="7" fill="#e0c040"/><rect x="3" y="11" width="11" height="1" fill="#e0c040"/><rect x="1" y="0" width="5" height="1" fill="#000"/><rect x="6" y="1" width="1" height="1" fill="#000"/><rect x="7" y="2" width="6" height="1" fill="#000"/><rect x="13" y="3" width="1" height="1" fill="#000"/><rect x="0" y="1" width="1" height="11" fill="#000"/><rect x="1" y="12" width="1" height="1" fill="#000"/><rect x="3" y="4" width="11" height="1" fill="#000"/><rect x="2" y="5" width="1" height="7" fill="#000"/><rect x="14" y="5" width="1" height="7" fill="#000"/><rect x="2" y="12" width="12" height="1" fill="#000"/></svg>
<div class="t" style="left:77px;top:414px;font-size:13px;line-height:17px">Report</div>
<div style="left:69px;top:439px;width:10px;height:1px;background:#b8b8b8"></div>
<svg style="left:81px;top:431px" width="11" height="14"><path d="M0.5 0.5 H6.5 L10.5 4.5 V13.5 H0.5 Z" fill="#fff" stroke="#000"/><path d="M6.5 0.5 V4.5 H10.5" fill="#fff" stroke="#000"/><rect x="2" y="2" width="3" height="1" fill="#40a0e8"/><rect x="2" y="4" width="3" height="1" fill="#40a0e8"/><rect x="2" y="6" width="7" height="1" fill="#40a0e8"/><rect x="2" y="8" width="7" height="1" fill="#40a0e8"/><rect x="2" y="10" width="7" height="1" fill="#40a0e8"/></svg>
<div class="t" style="left:100px;top:431px;font-size:13px;line-height:17px">Trial Balance</div>
<div style="left:73px;top:456px;width:6px;height:1px;background:#b8b8b8"></div>
<div style="left:62px;top:451px;width:11px;height:11px;background:#fff;border:1px solid #000;box-sizing:border-box"></div>
<div style="left:64px;top:456px;width:7px;height:1px;background:#000"></div>
<div style="left:67px;top:453px;width:1px;height:7px;background:#000"></div>
<svg style="left:79px;top:449px" width="15" height="13" shape-rendering="crispEdges"><rect x="1" y="1" width="5" height="11" fill="#f8e8a0"/><rect x="6" y="2" width="1" height="2" fill="#f8e8a0"/><rect x="7" y="3" width="6" height="1" fill="#f8e8a0"/><rect x="3" y="5" width="11" height="7" fill="#f0dc80"/><rect x="3" y="5" width="11" height="1" fill="#fff"/><rect x="13" y="5" width="1" height="7" fill="#e0c040"/><rect x="3" y="11" width="11" height="1" fill="#e0c040"/><rect x="1" y="0" width="5" height="1" fill="#000"/><rect x="6" y="1" width="1" height="1" fill="#000"/><rect x="7" y="2" width="6" height="1" fill="#000"/><rect x="13" y="3" width="1" height="1" fill="#000"/><rect x="0" y="1" width="1" height="11" fill="#000"/><rect x="1" y="12" width="1" height="1" fill="#000"/><rect x="3" y="4" width="11" height="1" fill="#000"/><rect x="2" y="5" width="1" height="7" fill="#000"/><rect x="14" y="5" width="1" height="7" fill="#000"/><rect x="2" y="12" width="12" height="1" fill="#000"/></svg>
<div class="t" style="left:96px;top:448px;font-size:13px;line-height:17px">Financial Statements</div>
<div style="left:73px;top:473px;width:6px;height:1px;background:#b8b8b8"></div>
<div style="left:62px;top:468px;width:11px;height:11px;background:#fff;border:1px solid #000;box-sizing:border-box"></div>
<div style="left:64px;top:473px;width:7px;height:1px;background:#000"></div>
<div style="left:67px;top:470px;width:1px;height:7px;background:#000"></div>
<svg style="left:79px;top:466px" width="15" height="13" shape-rendering="crispEdges"><rect x="1" y="1" width="5" height="11" fill="#f8e8a0"/><rect x="6" y="2" width="1" height="2" fill="#f8e8a0"/><rect x="7" y="3" width="6" height="1" fill="#f8e8a0"/><rect x="3" y="5" width="11" height="7" fill="#f0dc80"/><rect x="3" y="5" width="11" height="1" fill="#fff"/><rect x="13" y="5" width="1" height="7" fill="#e0c040"/><rect x="3" y="11" width="11" height="1" fill="#e0c040"/><rect x="1" y="0" width="5" height="1" fill="#000"/><rect x="6" y="1" width="1" height="1" fill="#000"/><rect x="7" y="2" width="6" height="1" fill="#000"/><rect x="13" y="3" width="1" height="1" fill="#000"/><rect x="0" y="1" width="1" height="11" fill="#000"/><rect x="1" y="12" width="1" height="1" fill="#000"/><rect x="3" y="4" width="11" height="1" fill="#000"/><rect x="2" y="5" width="1" height="7" fill="#000"/><rect x="14" y="5" width="1" height="7" fill="#000"/><rect x="2" y="12" width="12" height="1" fill="#000"/></svg>
<div class="t" style="left:96px;top:465px;font-size:13px;line-height:17px">Rent &amp; Subsidy</div>
<div style="left:73px;top:490px;width:6px;height:1px;background:#b8b8b8"></div>
<div style="left:62px;top:485px;width:11px;height:11px;background:#fff;border:1px solid #000;box-sizing:border-box"></div>
<div style="left:64px;top:490px;width:7px;height:1px;background:#000"></div>
<div style="left:67px;top:487px;width:1px;height:7px;background:#000"></div>
<svg style="left:79px;top:483px" width="15" height="13" shape-rendering="crispEdges"><rect x="1" y="1" width="5" height="11" fill="#f8e8a0"/><rect x="6" y="2" width="1" height="2" fill="#f8e8a0"/><rect x="7" y="3" width="6" height="1" fill="#f8e8a0"/><rect x="3" y="5" width="11" height="7" fill="#f0dc80"/><rect x="3" y="5" width="11" height="1" fill="#fff"/><rect x="13" y="5" width="1" height="7" fill="#e0c040"/><rect x="3" y="11" width="11" height="1" fill="#e0c040"/><rect x="1" y="0" width="5" height="1" fill="#000"/><rect x="6" y="1" width="1" height="1" fill="#000"/><rect x="7" y="2" width="6" height="1" fill="#000"/><rect x="13" y="3" width="1" height="1" fill="#000"/><rect x="0" y="1" width="1" height="11" fill="#000"/><rect x="1" y="12" width="1" height="1" fill="#000"/><rect x="3" y="4" width="11" height="1" fill="#000"/><rect x="2" y="5" width="1" height="7" fill="#000"/><rect x="14" y="5" width="1" height="7" fill="#000"/><rect x="2" y="12" width="12" height="1" fill="#000"/></svg>
<div class="t" style="left:96px;top:482px;font-size:13px;line-height:17px">Subsidiary Reports</div>
<div style="left:35px;top:507px;width:6px;height:1px;background:#b8b8b8"></div>
<div style="left:24px;top:502px;width:11px;height:11px;background:#fff;border:1px solid #000;box-sizing:border-box"></div>
<div style="left:26px;top:507px;width:7px;height:1px;background:#000"></div>
<div style="left:29px;top:504px;width:1px;height:7px;background:#000"></div>
<svg style="left:40px;top:498px" width="17" height="18" viewBox="0 0 17 18">
<path d="M14 3.5 L9.5 8" stroke="#7a9ad0" stroke-width="2"/>
<circle cx="14.3" cy="3.2" r="1.4" fill="#a8c4e8"/>
<path d="M8.5 9.5 L3.5 14.5" stroke="#4a78c0" stroke-width="3.8" stroke-linecap="round"/>
<path d="M8 10 L4 14" stroke="#a0b8d8" stroke-width="1.1"/>
<path d="M6.5 6 L13.2 12.7 L12.2 13.7 L5.5 7 Z" fill="#f0f0f0" stroke="#606060" stroke-width="0.9" stroke-linejoin="round"/>
<path d="M2.5 4.5 C2.5 2 4.5 1 6 1.8 L5 3.8 L6.5 5.3 L8.5 4.3 C9.3 6.3 8 8.3 5.8 7.8 Z" fill="#9a9a9a" stroke="#5a5a5a" stroke-width="0.7"/>
</svg>
<div class="t" style="left:58px;top:499px;font-size:13px;line-height:17px">System</div>
<div style="left:289px;top:74px;width:731px;height:642px;background:#000"></div>
<div style="left:1018px;top:75px;width:1px;height:640px;background:#404040"></div>
<div style="left:290px;top:714px;width:729px;height:1px;background:#808080"></div>
<div style="left:290px;top:75px;width:728px;height:639px;background:#fff0f0"></div>
<div style="left:1020px;top:74px;width:1px;height:643px;background:#ebe8e2"></div>
<div style="left:4px;top:716px;width:1017px;height:1px;background:#ebe8e2"></div>
<div style="left:290px;top:75px;width:14px;height:15px;background:#404040"></div>
<div style="left:290px;top:75px;width:13px;height:14px;background:#fff"></div>
<div style="left:291px;top:76px;width:12px;height:13px;background:#808080"></div>
<div style="left:291px;top:76px;width:11px;height:12px;background:#d4d0c8"></div>
<svg style="left:293px;top:81px" width="8" height="4" viewBox="0 0 8 4"><path d="M0 0 H8 L4 4 Z" fill="#000"/></svg>
<div style="left:304px;top:75px;width:701px;height:16px;background:#000080"></div>
<div class="t" style="left:305px;top:75px;font-weight:bold;font-size:11px;line-height:16px;color:#fff">/JOURNAL/PURCHASE/WO/WOO - Transactions Explorer - Sort: date   Tag: wo</div>
<div style="left:1005px;top:75px;width:13px;height:15px;background:#404040"></div>
<div style="left:1005px;top:75px;width:12px;height:14px;background:#fff"></div>
<div style="left:1006px;top:76px;width:11px;height:13px;background:#808080"></div>
<div style="left:1006px;top:76px;width:10px;height:12px;background:#d4d0c8"></div>
<svg style="left:1007px;top:78px" width="9" height="8" viewBox="0 0 9 8"><path d="M0.5 0.5 L8.5 7.5 M8.5 0.5 L0.5 7.5" stroke="#000" stroke-width="1.5"/></svg>
<div style="left:290px;top:91px;width:728px;height:18px;background:#dcdcdc"></div>
<div style="left:290px;top:91px;width:728px;height:1px;background:#fff"></div>
<div style="left:290px;top:91px;width:728px;height:1px;background:#ece8e0"></div>
<div style="left:447px;top:92px;width:1px;height:17px;background:#fff"></div>
<div style="left:447px;top:109px;width:571px;height:1px;background:#fff"></div>
<div style="left:290px;top:91px;width:96px;height:18px;background:#fff"></div>
<div style="left:291px;top:92px;width:94px;height:16px;background:#fff0f0"></div>
<div style="left:385px;top:91px;width:1px;height:18px;background:#000"></div>
<div class="t" style="left:290px;top:92px;width:95px;text-align:center;font-size:11px;line-height:16px">Transactions</div>
<div style="left:386px;top:91px;width:61px;height:18px;background:#fff"></div>
<div style="left:387px;top:92px;width:59px;height:16px;background:#dcdcdc"></div>
<div style="left:446px;top:91px;width:1px;height:18px;background:#000"></div>
<div class="t" style="left:386px;top:92px;width:60px;text-align:center;font-size:11px;line-height:16px">Notes</div>
<div style="left:290px;top:109px;width:157px;height:1px;background:#000"></div>
<div style="left:290px;top:110px;width:728px;height:1px;background:#000"></div>
<div style="left:291px;top:111px;width:40px;height:38px;background:#808080"></div>
<div style="left:291px;top:111px;width:39px;height:37px;background:#fff"></div>
<div style="left:292px;top:112px;width:38px;height:36px;background:#fff0f0"></div>
<div class="t" style="left:296px;top:128px;font-size:13px;line-height:17px">Line</div>
<div style="left:331px;top:111px;width:84px;height:38px;background:#808080"></div>
<div style="left:331px;top:111px;width:83px;height:37px;background:#fff"></div>
<div style="left:332px;top:112px;width:82px;height:36px;background:#fff0f0"></div>
<div class="t" style="left:336px;top:128px;font-size:13px;line-height:17px;font-weight:bold">Date  v</div>
<div style="left:415px;top:111px;width:56px;height:38px;background:#808080"></div>
<div style="left:415px;top:111px;width:55px;height:37px;background:#fff"></div>
<div style="left:416px;top:112px;width:54px;height:36px;background:#fff0f0"></div>
<div class="t" style="left:420px;top:128px;font-size:13px;line-height:17px">Ref #</div>
<div style="left:471px;top:111px;width:233px;height:38px;background:#808080"></div>
<div style="left:471px;top:111px;width:232px;height:37px;background:#fff"></div>
<div style="left:472px;top:112px;width:231px;height:36px;background:#fff0f0"></div>
<div class="t" style="left:476px;top:128px;font-size:13px;line-height:17px">Comment</div>
<div style="left:704px;top:111px;width:92px;height:38px;background:#808080"></div>
<div style="left:704px;top:111px;width:91px;height:37px;background:#fff"></div>
<div style="left:705px;top:112px;width:90px;height:36px;background:#fff0f0"></div>
<div class="t" style="left:709px;top:128px;font-size:13px;line-height:17px">Vendor</div>
<div style="left:796px;top:111px;width:199px;height:38px;background:#808080"></div>
<div style="left:796px;top:111px;width:198px;height:37px;background:#fff"></div>
<div style="left:797px;top:112px;width:197px;height:36px;background:#fff0f0"></div>
<div class="t" style="left:801px;top:128px;font-size:13px;line-height:17px">Vendor Description</div>
<div style="left:995px;top:111px;width:5px;height:38px;background:#808080"></div>
<div style="left:995px;top:111px;width:5px;height:37px;background:#fff"></div>
<div style="left:996px;top:112px;width:4px;height:36px;background:#fff0f0"></div>
<div style="left:291px;top:149px;width:40px;height:20px;background:#fff"></div>
<div style="left:291px;top:149px;width:39px;height:19px;background:#a0a0a0"></div>
<div style="left:292px;top:150px;width:38px;height:18px;background:#fff"></div>
<div class="t" style="left:292px;top:151px;font-size:13px;line-height:18px">4</div>
<div style="left:331px;top:149px;width:84px;height:20px;background:#fff"></div>
<div style="left:331px;top:149px;width:83px;height:19px;background:#a0a0a0"></div>
<div style="left:332px;top:150px;width:82px;height:18px;background:#fff"></div>
<div class="t" style="left:332px;top:151px;font-size:13px;line-height:18px">09 Mar 2015</div>
<div style="left:415px;top:149px;width:56px;height:20px;background:#fff"></div>
<div style="left:415px;top:149px;width:55px;height:19px;background:#a0a0a0"></div>
<div style="left:416px;top:150px;width:54px;height:18px;background:#fff"></div>
<div class="t" style="left:416px;top:151px;font-size:13px;line-height:18px">1046</div>
<div style="left:471px;top:149px;width:233px;height:20px;background:#fff"></div>
<div style="left:471px;top:149px;width:232px;height:19px;background:#a0a0a0"></div>
<div style="left:472px;top:150px;width:231px;height:18px;background:#fff"></div>
<div class="t" style="left:472px;top:151px;font-size:13px;line-height:18px">Unit front door is sticking</div>
<div style="left:704px;top:149px;width:92px;height:20px;background:#fff"></div>
<div style="left:704px;top:149px;width:91px;height:19px;background:#a0a0a0"></div>
<div style="left:705px;top:150px;width:90px;height:18px;background:#fff"></div>
<div class="t" style="left:705px;top:151px;font-size:13px;line-height:18px">STAFF</div>
<div style="left:796px;top:149px;width:199px;height:20px;background:#fff"></div>
<div style="left:796px;top:149px;width:198px;height:19px;background:#a0a0a0"></div>
<div style="left:797px;top:150px;width:197px;height:18px;background:#fff"></div>
<div class="t" style="left:797px;top:151px;font-size:13px;line-height:18px">Staff Handyman</div>
<div style="left:995px;top:149px;width:5px;height:20px;background:#fff"></div>
<div style="left:995px;top:149px;width:4px;height:19px;background:#a0a0a0"></div>
<div style="left:996px;top:150px;width:3px;height:18px;background:#fff"></div>
<div style="left:291px;top:169px;width:40px;height:20px;background:#fff"></div>
<div style="left:291px;top:169px;width:39px;height:19px;background:#a0a0a0"></div>
<div style="left:292px;top:170px;width:38px;height:18px;background:#fff0f0"></div>
<div class="t" style="left:292px;top:171px;font-size:13px;line-height:18px">5</div>
<div style="left:331px;top:169px;width:84px;height:20px;background:#fff"></div>
<div style="left:331px;top:169px;width:83px;height:19px;background:#a0a0a0"></div>
<div style="left:332px;top:170px;width:82px;height:18px;background:#fff0f0"></div>
<div class="t" style="left:332px;top:171px;font-size:13px;line-height:18px">11 Mar 2015</div>
<div style="left:415px;top:169px;width:56px;height:20px;background:#fff"></div>
<div style="left:415px;top:169px;width:55px;height:19px;background:#a0a0a0"></div>
<div style="left:416px;top:170px;width:54px;height:18px;background:#fff0f0"></div>
<div class="t" style="left:416px;top:171px;font-size:13px;line-height:18px">1047</div>
<div style="left:471px;top:169px;width:233px;height:20px;background:#fff"></div>
<div style="left:471px;top:169px;width:232px;height:19px;background:#a0a0a0"></div>
<div style="left:472px;top:170px;width:231px;height:18px;background:#fff0f0"></div>
<div class="t" style="left:472px;top:171px;font-size:13px;line-height:18px">Toilet handle broken</div>
<div style="left:704px;top:169px;width:92px;height:20px;background:#fff"></div>
<div style="left:704px;top:169px;width:91px;height:19px;background:#a0a0a0"></div>
<div style="left:705px;top:170px;width:90px;height:18px;background:#fff0f0"></div>
<div class="t" style="left:705px;top:171px;font-size:13px;line-height:18px">STAFF</div>
<div style="left:796px;top:169px;width:199px;height:20px;background:#fff"></div>
<div style="left:796px;top:169px;width:198px;height:19px;background:#a0a0a0"></div>
<div style="left:797px;top:170px;width:197px;height:18px;background:#fff0f0"></div>
<div class="t" style="left:797px;top:171px;font-size:13px;line-height:18px">Staff Handyman</div>
<div style="left:995px;top:169px;width:5px;height:20px;background:#fff"></div>
<div style="left:995px;top:169px;width:4px;height:19px;background:#a0a0a0"></div>
<div style="left:996px;top:170px;width:3px;height:18px;background:#fff0f0"></div>
<div style="left:291px;top:189px;width:40px;height:20px;background:#fff"></div>
<div style="left:291px;top:189px;width:39px;height:19px;background:#a0a0a0"></div>
<div style="left:292px;top:190px;width:38px;height:18px;background:#fff"></div>
<div class="t" style="left:292px;top:191px;font-size:13px;line-height:18px">6</div>
<div style="left:331px;top:189px;width:84px;height:20px;background:#fff"></div>
<div style="left:331px;top:189px;width:83px;height:19px;background:#a0a0a0"></div>
<div style="left:332px;top:190px;width:82px;height:18px;background:#fff"></div>
<div class="t" style="left:332px;top:191px;font-size:13px;line-height:18px">12 Mar 2015</div>
<div style="left:415px;top:189px;width:56px;height:20px;background:#fff"></div>
<div style="left:415px;top:189px;width:55px;height:19px;background:#a0a0a0"></div>
<div style="left:416px;top:190px;width:54px;height:18px;background:#fff"></div>
<div class="t" style="left:416px;top:191px;font-size:13px;line-height:18px">1048</div>
<div style="left:471px;top:189px;width:233px;height:20px;background:#fff"></div>
<div style="left:471px;top:189px;width:232px;height:19px;background:#a0a0a0"></div>
<div style="left:472px;top:190px;width:231px;height:18px;background:#fff"></div>
<div class="t" style="left:472px;top:191px;font-size:13px;line-height:18px">Window is drafty</div>
<div style="left:704px;top:189px;width:92px;height:20px;background:#fff"></div>
<div style="left:704px;top:189px;width:91px;height:19px;background:#a0a0a0"></div>
<div style="left:705px;top:190px;width:90px;height:18px;background:#fff"></div>
<div class="t" style="left:705px;top:191px;font-size:13px;line-height:18px">STAFF</div>
<div style="left:796px;top:189px;width:199px;height:20px;background:#fff"></div>
<div style="left:796px;top:189px;width:198px;height:19px;background:#a0a0a0"></div>
<div style="left:797px;top:190px;width:197px;height:18px;background:#fff"></div>
<div class="t" style="left:797px;top:191px;font-size:13px;line-height:18px">Staff Handyman</div>
<div style="left:995px;top:189px;width:5px;height:20px;background:#fff"></div>
<div style="left:995px;top:189px;width:4px;height:19px;background:#a0a0a0"></div>
<div style="left:996px;top:190px;width:3px;height:18px;background:#fff"></div>
<div style="left:291px;top:209px;width:40px;height:20px;background:#fff"></div>
<div style="left:291px;top:209px;width:39px;height:19px;background:#a0a0a0"></div>
<div style="left:292px;top:210px;width:38px;height:18px;background:#fff0f0"></div>
<div class="t" style="left:292px;top:211px;font-size:13px;line-height:18px">7</div>
<div style="left:331px;top:209px;width:84px;height:20px;background:#fff"></div>
<div style="left:331px;top:209px;width:83px;height:19px;background:#a0a0a0"></div>
<div style="left:332px;top:210px;width:82px;height:18px;background:#fff0f0"></div>
<div class="t" style="left:332px;top:211px;font-size:13px;line-height:18px">15 Mar 2015</div>
<div style="left:415px;top:209px;width:56px;height:20px;background:#fff"></div>
<div style="left:415px;top:209px;width:55px;height:19px;background:#a0a0a0"></div>
<div style="left:416px;top:210px;width:54px;height:18px;background:#fff0f0"></div>
<div class="t" style="left:416px;top:211px;font-size:13px;line-height:18px">1049</div>
<div style="left:471px;top:209px;width:233px;height:20px;background:#fff"></div>
<div style="left:471px;top:209px;width:232px;height:19px;background:#a0a0a0"></div>
<div style="left:472px;top:210px;width:231px;height:18px;background:#fff0f0"></div>
<div class="t" style="left:472px;top:211px;font-size:13px;line-height:18px">Screen door is jammed</div>
<div style="left:704px;top:209px;width:92px;height:20px;background:#fff"></div>
<div style="left:704px;top:209px;width:91px;height:19px;background:#a0a0a0"></div>
<div style="left:705px;top:210px;width:90px;height:18px;background:#fff0f0"></div>
<div class="t" style="left:705px;top:211px;font-size:13px;line-height:18px">STAFF</div>
<div style="left:796px;top:209px;width:199px;height:20px;background:#fff"></div>
<div style="left:796px;top:209px;width:198px;height:19px;background:#a0a0a0"></div>
<div style="left:797px;top:210px;width:197px;height:18px;background:#fff0f0"></div>
<div class="t" style="left:797px;top:211px;font-size:13px;line-height:18px">Staff Handyman</div>
<div style="left:995px;top:209px;width:5px;height:20px;background:#fff"></div>
<div style="left:995px;top:209px;width:4px;height:19px;background:#a0a0a0"></div>
<div style="left:996px;top:210px;width:3px;height:18px;background:#fff0f0"></div>
<div style="left:291px;top:229px;width:40px;height:20px;background:#fff"></div>
<div style="left:291px;top:229px;width:39px;height:19px;background:#a0a0a0"></div>
<div style="left:292px;top:230px;width:38px;height:18px;background:#fff"></div>
<div class="t" style="left:292px;top:231px;font-size:13px;line-height:18px">8</div>
<div style="left:331px;top:229px;width:84px;height:20px;background:#fff"></div>
<div style="left:331px;top:229px;width:83px;height:19px;background:#a0a0a0"></div>
<div style="left:332px;top:230px;width:82px;height:18px;background:#fff"></div>
<div class="t" style="left:332px;top:231px;font-size:13px;line-height:18px">17 Mar 2015</div>
<div style="left:415px;top:229px;width:56px;height:20px;background:#fff"></div>
<div style="left:415px;top:229px;width:55px;height:19px;background:#a0a0a0"></div>
<div style="left:416px;top:230px;width:54px;height:18px;background:#fff"></div>
<div class="t" style="left:416px;top:231px;font-size:13px;line-height:18px">1050</div>
<div style="left:471px;top:229px;width:233px;height:20px;background:#fff"></div>
<div style="left:471px;top:229px;width:232px;height:19px;background:#a0a0a0"></div>
<div style="left:472px;top:230px;width:231px;height:18px;background:#fff"></div>
<div class="t" style="left:472px;top:231px;font-size:13px;line-height:18px">Fence needs to be replaced</div>
<div style="left:704px;top:229px;width:92px;height:20px;background:#fff"></div>
<div style="left:704px;top:229px;width:91px;height:19px;background:#a0a0a0"></div>
<div style="left:705px;top:230px;width:90px;height:18px;background:#fff"></div>
<div class="t" style="left:705px;top:231px;font-size:13px;line-height:18px">HARDSAND</div>
<div style="left:796px;top:229px;width:199px;height:20px;background:#fff"></div>
<div style="left:796px;top:229px;width:198px;height:19px;background:#a0a0a0"></div>
<div style="left:797px;top:230px;width:197px;height:18px;background:#fff"></div>
<div class="t" style="left:797px;top:231px;font-size:13px;line-height:18px">Hardsand Fence &amp; Patio Centre</div>
<div style="left:995px;top:229px;width:5px;height:20px;background:#fff"></div>
<div style="left:995px;top:229px;width:4px;height:19px;background:#a0a0a0"></div>
<div style="left:996px;top:230px;width:3px;height:18px;background:#fff"></div>
<div style="left:291px;top:249px;width:40px;height:20px;background:#fff"></div>
<div style="left:291px;top:249px;width:39px;height:19px;background:#a0a0a0"></div>
<div style="left:292px;top:250px;width:38px;height:18px;background:#fff0f0"></div>
<div class="t" style="left:292px;top:251px;font-size:13px;line-height:18px">9</div>
<div style="left:331px;top:249px;width:84px;height:20px;background:#fff"></div>
<div style="left:331px;top:249px;width:83px;height:19px;background:#a0a0a0"></div>
<div style="left:332px;top:250px;width:82px;height:18px;background:#fff0f0"></div>
<div class="t" style="left:332px;top:251px;font-size:13px;line-height:18px">19 Mar 2015</div>
<div style="left:415px;top:249px;width:56px;height:20px;background:#fff"></div>
<div style="left:415px;top:249px;width:55px;height:19px;background:#a0a0a0"></div>
<div style="left:416px;top:250px;width:54px;height:18px;background:#fff0f0"></div>
<div class="t" style="left:416px;top:251px;font-size:13px;line-height:18px">1051</div>
<div style="left:471px;top:249px;width:233px;height:20px;background:#fff"></div>
<div style="left:471px;top:249px;width:232px;height:19px;background:#a0a0a0"></div>
<div style="left:472px;top:250px;width:231px;height:18px;background:#fff0f0"></div>
<div class="t" style="left:472px;top:251px;font-size:13px;line-height:18px">Mice spotted in basement</div>
<div style="left:704px;top:249px;width:92px;height:20px;background:#fff"></div>
<div style="left:704px;top:249px;width:91px;height:19px;background:#a0a0a0"></div>
<div style="left:705px;top:250px;width:90px;height:18px;background:#fff0f0"></div>
<div class="t" style="left:705px;top:251px;font-size:13px;line-height:18px">ABEL</div>
<div style="left:796px;top:249px;width:199px;height:20px;background:#fff"></div>
<div style="left:796px;top:249px;width:198px;height:19px;background:#a0a0a0"></div>
<div style="left:797px;top:250px;width:197px;height:18px;background:#fff0f0"></div>
<div class="t" style="left:797px;top:251px;font-size:13px;line-height:18px">Abel Pest Control Inc.</div>
<div style="left:995px;top:249px;width:5px;height:20px;background:#fff"></div>
<div style="left:995px;top:249px;width:4px;height:19px;background:#a0a0a0"></div>
<div style="left:996px;top:250px;width:3px;height:18px;background:#fff0f0"></div>
<div style="left:291px;top:269px;width:40px;height:20px;background:#fff"></div>
<div style="left:291px;top:269px;width:39px;height:19px;background:#a0a0a0"></div>
<div style="left:292px;top:270px;width:38px;height:18px;background:#fff"></div>
<div class="t" style="left:292px;top:271px;font-size:13px;line-height:18px">10</div>
<div style="left:331px;top:269px;width:84px;height:20px;background:#fff"></div>
<div style="left:331px;top:269px;width:83px;height:19px;background:#a0a0a0"></div>
<div style="left:332px;top:270px;width:82px;height:18px;background:#fff"></div>
<div class="t" style="left:332px;top:271px;font-size:13px;line-height:18px">20 Mar 2015</div>
<div style="left:415px;top:269px;width:56px;height:20px;background:#fff"></div>
<div style="left:415px;top:269px;width:55px;height:19px;background:#a0a0a0"></div>
<div style="left:416px;top:270px;width:54px;height:18px;background:#fff"></div>
<div class="t" style="left:416px;top:271px;font-size:13px;line-height:18px">1052</div>
<div style="left:471px;top:269px;width:233px;height:20px;background:#fff"></div>
<div style="left:471px;top:269px;width:232px;height:19px;background:#a0a0a0"></div>
<div style="left:472px;top:270px;width:231px;height:18px;background:#fff"></div>
<div class="t" style="left:472px;top:271px;font-size:13px;line-height:18px">Fridge is making a lot of noise</div>
<div style="left:704px;top:269px;width:92px;height:20px;background:#fff"></div>
<div style="left:704px;top:269px;width:91px;height:19px;background:#a0a0a0"></div>
<div style="left:705px;top:270px;width:90px;height:18px;background:#fff"></div>
<div class="t" style="left:705px;top:271px;font-size:13px;line-height:18px">STAFF</div>
<div style="left:796px;top:269px;width:199px;height:20px;background:#fff"></div>
<div style="left:796px;top:269px;width:198px;height:19px;background:#a0a0a0"></div>
<div style="left:797px;top:270px;width:197px;height:18px;background:#fff"></div>
<div class="t" style="left:797px;top:271px;font-size:13px;line-height:18px">Staff Handyman</div>
<div style="left:995px;top:269px;width:5px;height:20px;background:#fff"></div>
<div style="left:995px;top:269px;width:4px;height:19px;background:#a0a0a0"></div>
<div style="left:996px;top:270px;width:3px;height:18px;background:#fff"></div>
<div style="left:291px;top:289px;width:40px;height:20px;background:#fff"></div>
<div style="left:291px;top:289px;width:39px;height:19px;background:#a0a0a0"></div>
<div style="left:292px;top:290px;width:38px;height:18px;background:#fff0f0"></div>
<div class="t" style="left:292px;top:291px;font-size:13px;line-height:18px">11</div>
<div style="left:331px;top:289px;width:84px;height:20px;background:#fff"></div>
<div style="left:331px;top:289px;width:83px;height:19px;background:#a0a0a0"></div>
<div style="left:332px;top:290px;width:82px;height:18px;background:#fff0f0"></div>
<div class="t" style="left:332px;top:291px;font-size:13px;line-height:18px">24 Mar 2015</div>
<div style="left:415px;top:289px;width:56px;height:20px;background:#fff"></div>
<div style="left:415px;top:289px;width:55px;height:19px;background:#a0a0a0"></div>
<div style="left:416px;top:290px;width:54px;height:18px;background:#fff0f0"></div>
<div class="t" style="left:416px;top:291px;font-size:13px;line-height:18px">1053</div>
<div style="left:471px;top:289px;width:233px;height:20px;background:#fff"></div>
<div style="left:471px;top:289px;width:232px;height:19px;background:#a0a0a0"></div>
<div style="left:472px;top:290px;width:231px;height:18px;background:#fff0f0"></div>
<div class="t" style="left:472px;top:291px;font-size:13px;line-height:18px">Livingroom needs painting</div>
<div style="left:704px;top:289px;width:92px;height:20px;background:#fff"></div>
<div style="left:704px;top:289px;width:91px;height:19px;background:#a0a0a0"></div>
<div style="left:705px;top:290px;width:90px;height:18px;background:#fff0f0"></div>
<div class="t" style="left:705px;top:291px;font-size:13px;line-height:18px">STAFF</div>
<div style="left:796px;top:289px;width:199px;height:20px;background:#fff"></div>
<div style="left:796px;top:289px;width:198px;height:19px;background:#a0a0a0"></div>
<div style="left:797px;top:290px;width:197px;height:18px;background:#fff0f0"></div>
<div class="t" style="left:797px;top:291px;font-size:13px;line-height:18px">Staff Handyman</div>
<div style="left:995px;top:289px;width:5px;height:20px;background:#fff"></div>
<div style="left:995px;top:289px;width:4px;height:19px;background:#a0a0a0"></div>
<div style="left:996px;top:290px;width:3px;height:18px;background:#fff0f0"></div>
<div style="left:291px;top:309px;width:40px;height:20px;background:#fff"></div>
<div style="left:291px;top:309px;width:39px;height:19px;background:#a0a0a0"></div>
<div style="left:292px;top:310px;width:38px;height:18px;background:#fff"></div>
<div class="t" style="left:292px;top:311px;font-size:13px;line-height:18px">12</div>
<div style="left:331px;top:309px;width:84px;height:20px;background:#fff"></div>
<div style="left:331px;top:309px;width:83px;height:19px;background:#a0a0a0"></div>
<div style="left:332px;top:310px;width:82px;height:18px;background:#fff"></div>
<div class="t" style="left:332px;top:311px;font-size:13px;line-height:18px">27 Mar 2015</div>
<div style="left:415px;top:309px;width:56px;height:20px;background:#fff"></div>
<div style="left:415px;top:309px;width:55px;height:19px;background:#a0a0a0"></div>
<div style="left:416px;top:310px;width:54px;height:18px;background:#fff"></div>
<div class="t" style="left:416px;top:311px;font-size:13px;line-height:18px">1055</div>
<div style="left:471px;top:309px;width:233px;height:20px;background:#fff"></div>
<div style="left:471px;top:309px;width:232px;height:19px;background:#a0a0a0"></div>
<div style="left:472px;top:310px;width:231px;height:18px;background:#fff"></div>
<div class="t" style="left:472px;top:311px;font-size:13px;line-height:18px">Dishwasher leaks water</div>
<div style="left:704px;top:309px;width:92px;height:20px;background:#fff"></div>
<div style="left:704px;top:309px;width:91px;height:19px;background:#a0a0a0"></div>
<div style="left:705px;top:310px;width:90px;height:18px;background:#fff"></div>
<div class="t" style="left:705px;top:311px;font-size:13px;line-height:18px">STAFF</div>
<div style="left:796px;top:309px;width:199px;height:20px;background:#fff"></div>
<div style="left:796px;top:309px;width:198px;height:19px;background:#a0a0a0"></div>
<div style="left:797px;top:310px;width:197px;height:18px;background:#fff"></div>
<div class="t" style="left:797px;top:311px;font-size:13px;line-height:18px">Staff Handyman</div>
<div style="left:995px;top:309px;width:5px;height:20px;background:#fff"></div>
<div style="left:995px;top:309px;width:4px;height:19px;background:#a0a0a0"></div>
<div style="left:996px;top:310px;width:3px;height:18px;background:#fff"></div>
<div style="left:291px;top:329px;width:40px;height:20px;background:#fff"></div>
<div style="left:291px;top:329px;width:39px;height:19px;background:#a0a0a0"></div>
<div style="left:292px;top:330px;width:38px;height:18px;background:#fff0f0"></div>
<div class="t" style="left:292px;top:331px;font-size:13px;line-height:18px">13</div>
<div style="left:331px;top:329px;width:84px;height:20px;background:#fff"></div>
<div style="left:331px;top:329px;width:83px;height:19px;background:#a0a0a0"></div>
<div style="left:332px;top:330px;width:82px;height:18px;background:#fff0f0"></div>
<div class="t" style="left:332px;top:331px;font-size:13px;line-height:18px">28 Mar 2015</div>
<div style="left:415px;top:329px;width:56px;height:20px;background:#fff"></div>
<div style="left:415px;top:329px;width:55px;height:19px;background:#a0a0a0"></div>
<div style="left:416px;top:330px;width:54px;height:18px;background:#fff0f0"></div>
<div class="t" style="left:416px;top:331px;font-size:13px;line-height:18px">1056</div>
<div style="left:471px;top:329px;width:233px;height:20px;background:#fff"></div>
<div style="left:471px;top:329px;width:232px;height:19px;background:#a0a0a0"></div>
<div style="left:472px;top:330px;width:231px;height:18px;background:#fff0f0"></div>
<div class="t" style="left:472px;top:331px;font-size:13px;line-height:18px">Weeds are taking over the front yard</div>
<div style="left:704px;top:329px;width:92px;height:20px;background:#fff"></div>
<div style="left:704px;top:329px;width:91px;height:19px;background:#a0a0a0"></div>
<div style="left:705px;top:330px;width:90px;height:18px;background:#fff0f0"></div>
<div class="t" style="left:705px;top:331px;font-size:13px;line-height:18px">WEED</div>
<div style="left:796px;top:329px;width:199px;height:20px;background:#fff"></div>
<div style="left:796px;top:329px;width:198px;height:19px;background:#a0a0a0"></div>
<div style="left:797px;top:330px;width:197px;height:18px;background:#fff0f0"></div>
<div class="t" style="left:797px;top:331px;font-size:13px;line-height:18px">WeedMan</div>
<div style="left:995px;top:329px;width:5px;height:20px;background:#fff"></div>
<div style="left:995px;top:329px;width:4px;height:19px;background:#a0a0a0"></div>
<div style="left:996px;top:330px;width:3px;height:18px;background:#fff0f0"></div>
<div style="left:291px;top:349px;width:40px;height:20px;background:#fff"></div>
<div style="left:291px;top:349px;width:39px;height:19px;background:#a0a0a0"></div>
<div style="left:292px;top:350px;width:38px;height:18px;background:#fff"></div>
<div class="t" style="left:292px;top:351px;font-size:13px;line-height:18px">14</div>
<div style="left:331px;top:349px;width:84px;height:20px;background:#fff"></div>
<div style="left:331px;top:349px;width:83px;height:19px;background:#a0a0a0"></div>
<div style="left:332px;top:350px;width:82px;height:18px;background:#fff"></div>
<div class="t" style="left:332px;top:351px;font-size:13px;line-height:18px">30 Mar 2015</div>
<div style="left:415px;top:349px;width:56px;height:20px;background:#fff"></div>
<div style="left:415px;top:349px;width:55px;height:19px;background:#a0a0a0"></div>
<div style="left:416px;top:350px;width:54px;height:18px;background:#fff"></div>
<div class="t" style="left:416px;top:351px;font-size:13px;line-height:18px">1057</div>
<div style="left:471px;top:349px;width:233px;height:20px;background:#fff"></div>
<div style="left:471px;top:349px;width:232px;height:19px;background:#a0a0a0"></div>
<div style="left:472px;top:350px;width:231px;height:18px;background:#fff"></div>
<div class="t" style="left:472px;top:351px;font-size:13px;line-height:18px">Parking lot needs lines re-painted</div>
<div style="left:704px;top:349px;width:92px;height:20px;background:#fff"></div>
<div style="left:704px;top:349px;width:91px;height:19px;background:#a0a0a0"></div>
<div style="left:705px;top:350px;width:90px;height:18px;background:#fff"></div>
<div class="t" style="left:705px;top:351px;font-size:13px;line-height:18px">STAFF</div>
<div style="left:796px;top:349px;width:199px;height:20px;background:#fff"></div>
<div style="left:796px;top:349px;width:198px;height:19px;background:#a0a0a0"></div>
<div style="left:797px;top:350px;width:197px;height:18px;background:#fff"></div>
<div class="t" style="left:797px;top:351px;font-size:13px;line-height:18px">Staff Handyman</div>
<div style="left:995px;top:349px;width:5px;height:20px;background:#fff"></div>
<div style="left:995px;top:349px;width:4px;height:19px;background:#a0a0a0"></div>
<div style="left:996px;top:350px;width:3px;height:18px;background:#fff"></div>
<div style="left:291px;top:369px;width:40px;height:20px;background:#fff"></div>
<div style="left:291px;top:369px;width:39px;height:19px;background:#a0a0a0"></div>
<div style="left:292px;top:370px;width:38px;height:18px;background:#e0d4d4"></div>
<div class="t" style="left:292px;top:371px;font-size:13px;line-height:18px">15</div>
<div style="left:331px;top:369px;width:84px;height:20px;background:#fff"></div>
<div style="left:331px;top:369px;width:83px;height:19px;background:#a0a000"></div>
<div style="left:332px;top:370px;width:82px;height:18px;background:#ffff00"></div>
<div class="t" style="left:332px;top:371px;font-size:13px;line-height:18px">02 Apr 2015</div>
<div style="left:415px;top:369px;width:56px;height:20px;background:#fff"></div>
<div style="left:415px;top:369px;width:55px;height:19px;background:#a0a0a0"></div>
<div style="left:416px;top:370px;width:54px;height:18px;background:#e0d4d4"></div>
<div class="t" style="left:416px;top:371px;font-size:13px;line-height:18px">1058</div>
<div style="left:471px;top:369px;width:233px;height:20px;background:#fff"></div>
<div style="left:471px;top:369px;width:232px;height:19px;background:#a0a0a0"></div>
<div style="left:472px;top:370px;width:231px;height:18px;background:#e0d4d4"></div>
<div class="t" style="left:472px;top:371px;font-size:13px;line-height:18px">Door falling off</div>
<div style="left:704px;top:369px;width:92px;height:20px;background:#fff"></div>
<div style="left:704px;top:369px;width:91px;height:19px;background:#a0a0a0"></div>
<div style="left:705px;top:370px;width:90px;height:18px;background:#e0d4d4"></div>
<div class="t" style="left:705px;top:371px;font-size:13px;line-height:18px">STAFF</div>
<div style="left:796px;top:369px;width:199px;height:20px;background:#fff"></div>
<div style="left:796px;top:369px;width:198px;height:19px;background:#a0a0a0"></div>
<div style="left:797px;top:370px;width:197px;height:18px;background:#e0d4d4"></div>
<div class="t" style="left:797px;top:371px;font-size:13px;line-height:18px">Staff Handyman</div>
<div style="left:995px;top:369px;width:5px;height:20px;background:#fff"></div>
<div style="left:995px;top:369px;width:4px;height:19px;background:#a0a0a0"></div>
<div style="left:996px;top:370px;width:3px;height:18px;background:#e0d4d4"></div>
<div style="left:1000px;top:111px;width:18px;height:296px;background:repeating-conic-gradient(#d4d0c8 0 25%,#fff 0 50%) 0 0/2px 2px"></div>
<div style="left:1000px;top:111px;width:18px;height:16px;background:#404040"></div>
<div style="left:1000px;top:111px;width:17px;height:15px;background:#d4d0c8"></div>
<div style="left:1001px;top:112px;width:16px;height:14px;background:#808080"></div>
<div style="left:1001px;top:112px;width:15px;height:13px;background:#fff"></div>
<div style="left:1002px;top:113px;width:14px;height:12px;background:#d4d0c8"></div>
<svg style="left:1005px;top:117px" width="7" height="4" viewBox="0 0 7 4"><path d="M0 4 H7 L3.5 0 Z" fill="#000"/></svg>
<div style="left:1000px;top:181px;width:18px;height:210px;background:#404040"></div>
<div style="left:1000px;top:181px;width:17px;height:209px;background:#d4d0c8"></div>
<div style="left:1001px;top:182px;width:16px;height:208px;background:#808080"></div>
<div style="left:1001px;top:182px;width:15px;height:207px;background:#fff"></div>
<div style="left:1002px;top:183px;width:14px;height:206px;background:#d4d0c8"></div>
<div style="left:1000px;top:391px;width:18px;height:16px;background:#404040"></div>
<div style="left:1000px;top:391px;width:17px;height:15px;background:#d4d0c8"></div>
<div style="left:1001px;top:392px;width:16px;height:14px;background:#808080"></div>
<div style="left:1001px;top:392px;width:15px;height:13px;background:#fff"></div>
<div style="left:1002px;top:393px;width:14px;height:12px;background:#d4d0c8"></div>
<svg style="left:1005px;top:397px" width="7" height="4" viewBox="0 0 7 4"><path d="M0 0 H7 L3.5 4 Z" fill="#000"/></svg>
<div style="left:291px;top:407px;width:709px;height:18px;background:repeating-conic-gradient(#d4d0c8 0 25%,#fff 0 50%) 0 0/2px 2px"></div>
<div style="left:291px;top:407px;width:16px;height:18px;background:#404040"></div>
<div style="left:291px;top:407px;width:15px;height:17px;background:#d4d0c8"></div>
<div style="left:292px;top:408px;width:14px;height:16px;background:#808080"></div>
<div style="left:292px;top:408px;width:13px;height:15px;background:#fff"></div>
<div style="left:293px;top:409px;width:12px;height:14px;background:#d4d0c8"></div>
<svg style="left:296px;top:412px" width="4" height="7" viewBox="0 0 4 7"><path d="M4 0 V7 L0 3.5 Z" fill="#000"/></svg>
<div style="left:307px;top:407px;width:333px;height:18px;background:#404040"></div>
<div style="left:307px;top:407px;width:332px;height:17px;background:#d4d0c8"></div>
<div style="left:308px;top:408px;width:331px;height:16px;background:#808080"></div>
<div style="left:308px;top:408px;width:330px;height:15px;background:#fff"></div>
<div style="left:309px;top:409px;width:329px;height:14px;background:#d4d0c8"></div>
<div style="left:984px;top:407px;width:16px;height:18px;background:#404040"></div>
<div style="left:984px;top:407px;width:15px;height:17px;background:#d4d0c8"></div>
<div style="left:985px;top:408px;width:14px;height:16px;background:#808080"></div>
<div style="left:985px;top:408px;width:13px;height:15px;background:#fff"></div>
<div style="left:986px;top:409px;width:12px;height:14px;background:#d4d0c8"></div>
<svg style="left:990px;top:412px" width="4" height="7" viewBox="0 0 4 7"><path d="M0 0 V7 L4 3.5 Z" fill="#000"/></svg>
<div style="left:1000px;top:407px;width:18px;height:18px;background:#e8e8e8"></div>
<div style="left:1008px;top:407px;width:1px;height:18px;background:#c8c8c8"></div>
<div style="left:1018px;top:111px;width:1px;height:314px;background:#000"></div>
<div style="left:290px;top:425px;width:728px;height:1px;background:#000"></div>
<div style="left:290px;top:426px;width:728px;height:17px;background:#808080"></div>
<div style="left:291px;top:428px;width:14px;height:14px;background:#404040"></div>
<div style="left:291px;top:428px;width:13px;height:13px;background:#fff"></div>
<div style="left:292px;top:429px;width:12px;height:12px;background:#808080"></div>
<div style="left:292px;top:429px;width:11px;height:11px;background:#d4d0c8"></div>
<svg style="left:294px;top:433px" width="8" height="4" viewBox="0 0 8 4"><path d="M0 0 H8 L4 4 Z" fill="#000"/></svg>
<div class="t" style="left:306px;top:426px;font-weight:bold;font-size:11px;line-height:16px;color:#d4d0c8">/TRANSACTION/PURCHASE/2015Apr02 - Details - Sort: Line</div>
<div style="left:1004px;top:428px;width:14px;height:14px;background:#404040"></div>
<div style="left:1004px;top:428px;width:13px;height:13px;background:#fff"></div>
<div style="left:1005px;top:429px;width:12px;height:12px;background:#808080"></div>
<div style="left:1005px;top:429px;width:11px;height:11px;background:#d4d0c8"></div>
<svg style="left:1007px;top:431px" width="9" height="8" viewBox="0 0 9 8"><path d="M0.5 0.5 L8.5 7.5 M8.5 0.5 L0.5 7.5" stroke="#000" stroke-width="1.5"/></svg>
<div style="left:290px;top:443px;width:728px;height:18px;background:#dcdcdc"></div>
<div style="left:290px;top:443px;width:66px;height:18px;background:#fff"></div>
<div style="left:291px;top:444px;width:64px;height:16px;background:#fff0f0"></div>
<div style="left:355px;top:443px;width:1px;height:18px;background:#000"></div>
<div class="t" style="left:290px;top:444px;width:65px;text-align:center;font-size:11px;line-height:16px">Details</div>
<div style="left:356px;top:443px;width:106px;height:18px;background:#fff"></div>
<div style="left:357px;top:444px;width:104px;height:16px;background:#dcdcdc"></div>
<div style="left:461px;top:443px;width:1px;height:18px;background:#000"></div>
<div class="t" style="left:356px;top:444px;width:105px;text-align:center;font-size:11px;line-height:16px">Vendor Ledger</div>
<div style="left:462px;top:443px;width:114px;height:18px;background:#fff"></div>
<div style="left:463px;top:444px;width:112px;height:16px;background:#dcdcdc"></div>
<div style="left:575px;top:443px;width:1px;height:18px;background:#000"></div>
<div class="t" style="left:462px;top:444px;width:113px;text-align:center;font-size:11px;line-height:16px">Vendor Address</div>
<div style="left:576px;top:443px;width:135px;height:18px;background:#fff"></div>
<div style="left:577px;top:444px;width:133px;height:16px;background:#dcdcdc"></div>
<div style="left:710px;top:443px;width:1px;height:18px;background:#000"></div>
<div class="t" style="left:576px;top:444px;width:134px;text-align:center;font-size:11px;line-height:16px">Extra Addresses     +</div>
<div style="left:711px;top:443px;width:150px;height:18px;background:#fff"></div>
<div style="left:712px;top:444px;width:148px;height:16px;background:#dcdcdc"></div>
<div style="left:860px;top:443px;width:1px;height:18px;background:#000"></div>
<div class="t" style="left:711px;top:444px;width:149px;text-align:center;font-size:11px;line-height:16px">Tenant / Member Ledger</div>
<div style="left:861px;top:443px;width:157px;height:18px;background:#fff"></div>
<div style="left:862px;top:444px;width:155px;height:16px;background:#dcdcdc"></div>
<div style="left:1017px;top:443px;width:1px;height:18px;background:#000"></div>
<div class="t" style="left:861px;top:444px;width:156px;text-align:center;font-size:11px;line-height:16px">Tenant / Member Address</div>
<div style="left:290px;top:461px;width:728px;height:1px;background:#000"></div>
<div style="left:291px;top:462px;width:58px;height:20px;background:#808080"></div>
<div style="left:291px;top:462px;width:57px;height:19px;background:#fff"></div>
<div style="left:292px;top:463px;width:56px;height:18px;background:#fffad8"></div>
<div class="t" style="left:296px;top:463px;font-size:13px;line-height:18px;font-weight:bold">Line  v</div>
<div style="left:349px;top:462px;width:94px;height:20px;background:#808080"></div>
<div style="left:349px;top:462px;width:93px;height:19px;background:#fff"></div>
<div style="left:350px;top:463px;width:92px;height:18px;background:#fff0f0"></div>
<div class="t" style="left:354px;top:463px;font-size:13px;line-height:18px">Item</div>
<div style="left:443px;top:462px;width:158px;height:20px;background:#808080"></div>
<div style="left:443px;top:462px;width:157px;height:19px;background:#fff"></div>
<div style="left:444px;top:463px;width:156px;height:18px;background:#fff0f0"></div>
<div class="t" style="left:448px;top:463px;font-size:13px;line-height:18px">Item Description</div>
<div style="left:601px;top:462px;width:245px;height:20px;background:#808080"></div>
<div style="left:601px;top:462px;width:244px;height:19px;background:#fff"></div>
<div style="left:602px;top:463px;width:243px;height:18px;background:#fff0f0"></div>
<div class="t" style="left:606px;top:463px;font-size:13px;line-height:18px">Comment</div>
<div style="left:846px;top:462px;width:86px;height:20px;background:#808080"></div>
<div style="left:846px;top:462px;width:85px;height:19px;background:#fff"></div>
<div style="left:847px;top:463px;width:84px;height:18px;background:#fff0f0"></div>
<div class="t" style="left:851px;top:463px;font-size:13px;line-height:18px">Amount</div>
<div style="left:932px;top:462px;width:86px;height:20px;background:#808080"></div>
<div style="left:932px;top:462px;width:85px;height:19px;background:#fff"></div>
<div style="left:933px;top:463px;width:84px;height:18px;background:#fff0f0"></div>
<div class="t" style="left:937px;top:463px;font-size:13px;line-height:18px">Total</div>
<div style="left:291px;top:482px;width:58px;height:20px;background:#fff"></div>
<div style="left:291px;top:482px;width:57px;height:19px;background:#a0a0a0"></div>
<div style="left:292px;top:483px;width:56px;height:18px;background:#fff0f0"></div>
<div class="t" style="left:292px;top:484px;font-size:13px;line-height:18px">1</div>
<div style="left:349px;top:482px;width:94px;height:20px;background:#fff"></div>
<div style="left:349px;top:482px;width:93px;height:19px;background:#a0a0a0"></div>
<div style="left:350px;top:483px;width:92px;height:18px;background:#fff0f0"></div>
<div class="t" style="left:350px;top:484px;font-size:13px;line-height:18px">105.DOOR</div>
<div style="left:443px;top:482px;width:158px;height:20px;background:#fff"></div>
<div style="left:443px;top:482px;width:157px;height:19px;background:#a0a0a0"></div>
<div style="left:444px;top:483px;width:156px;height:18px;background:#fff0f0"></div>
<div class="t" style="left:444px;top:484px;font-size:13px;line-height:18px">105 Doors &amp; Windows</div>
<div style="left:601px;top:482px;width:245px;height:20px;background:#fff"></div>
<div style="left:601px;top:482px;width:244px;height:19px;background:#a0a0a0"></div>
<div style="left:602px;top:483px;width:243px;height:18px;background:#fff0f0"></div>
<div class="t" style="left:602px;top:484px;font-size:13px;line-height:18px">Need to replace hinge</div>
<div style="left:846px;top:482px;width:86px;height:20px;background:#fff"></div>
<div style="left:846px;top:482px;width:85px;height:19px;background:#a0a0a0"></div>
<div style="left:847px;top:483px;width:84px;height:18px;background:#fff0f0"></div>
<div class="t" style="left:846px;top:484px;width:78px;text-align:right;font-size:13px;line-height:18px">10.00</div>
<div style="left:932px;top:482px;width:86px;height:20px;background:#fff"></div>
<div style="left:932px;top:482px;width:85px;height:19px;background:#a0a0a0"></div>
<div style="left:933px;top:483px;width:84px;height:18px;background:#fff0f0"></div>
<div class="t" style="left:932px;top:484px;width:78px;text-align:right;font-size:13px;line-height:18px">10.00</div>
<div style="left:290px;top:111px;width:1px;height:313px;background:#303030"></div>
<div style="left:290px;top:462px;width:1px;height:40px;background:#505050"></div>
<div style="left:288px;top:91px;width:1px;height:624px;background:#707070"></div>
<div style="left:290px;top:111px;width:1px;height:313px;background:#000"></div>
<div style="left:291px;top:389px;width:1px;height:18px;background:#fff"></div>
<div style="left:290px;top:502px;width:1px;height:212px;background:#808080"></div>
<div style="left:291px;top:502px;width:1px;height:212px;background:#fff"></div>
</body></html>
